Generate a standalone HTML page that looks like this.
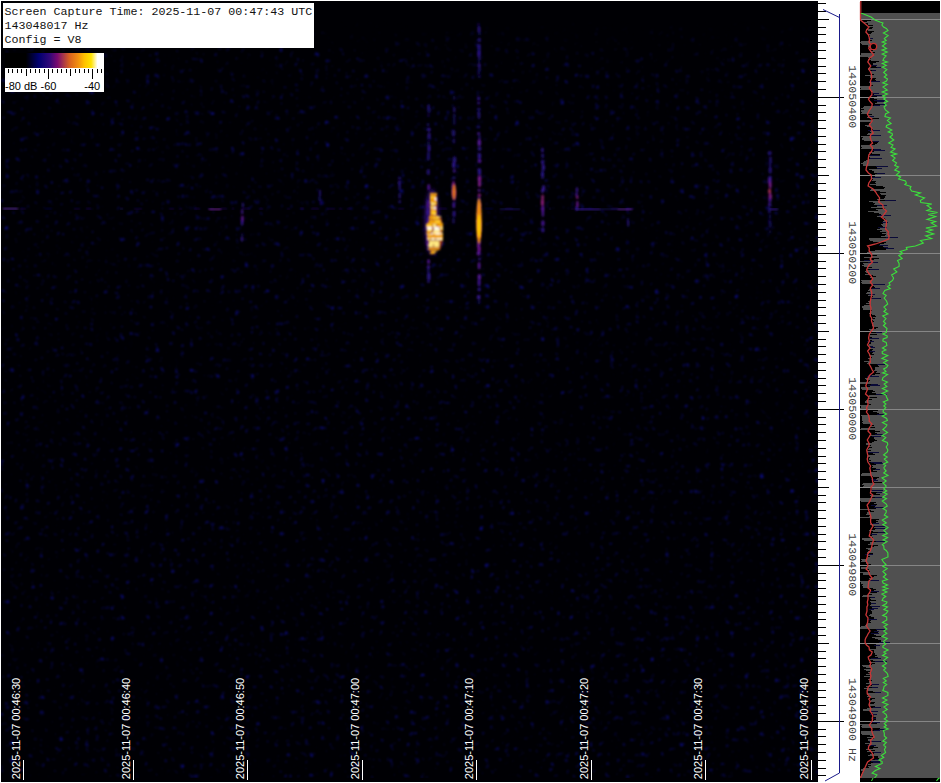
<!DOCTYPE html><html><head><meta charset="utf-8"><style>html,body{margin:0;padding:0;background:#fff;width:941px;height:783px;overflow:hidden}</style></head><body><svg width="941" height="783" style="position:absolute;left:0;top:0">
<defs>
 <linearGradient id="cb" x1="0" x2="1" y1="0" y2="0"><stop offset="0" stop-color="rgb(0, 0, 0)"/><stop offset="0.21" stop-color="rgb(0, 0, 0)"/><stop offset="0.34" stop-color="rgb(0, 0, 112)"/><stop offset="0.45" stop-color="rgb(48, 8, 122)"/><stop offset="0.53" stop-color="rgb(122, 10, 112)"/><stop offset="0.58" stop-color="rgb(160, 48, 80)"/><stop offset="0.65" stop-color="rgb(216, 96, 32)"/><stop offset="0.74" stop-color="rgb(242, 144, 16)"/><stop offset="0.8" stop-color="rgb(255, 192, 0)"/><stop offset="0.87" stop-color="rgb(255, 226, 0)"/><stop offset="0.935" stop-color="rgb(255, 255, 255)"/><stop offset="1" stop-color="rgb(255, 255, 255)"/></linearGradient>
 <filter id="noise" x="0" y="0" width="100%" height="100%" color-interpolation-filters="sRGB">
  <feTurbulence type="fractalNoise" baseFrequency="0.2 0.19" numOctaves="3" seed="11" result="t"/>
  <feColorMatrix in="t" type="matrix" values="0 0 0 0 0.05  0 0 0 0 0.05  0 0 0 0 0.6  3.8 0 0 0 -2.52"/>
  <feGaussianBlur stdDeviation="0.8"/>
 </filter>
 <linearGradient id="fadeg" x1="0" x2="0" y1="0" y2="1" gradientUnits="objectBoundingBox"><stop offset="0" stop-color="#fff" stop-opacity="0"/><stop offset="0.045" stop-color="#fff" stop-opacity="0.8"/><stop offset="0.09" stop-color="#fff" stop-opacity="1"/><stop offset="1" stop-color="#fff" stop-opacity="1"/></linearGradient>
 <mask id="fade" maskUnits="userSpaceOnUse" x="0" y="0" width="941" height="783"><rect x="1" y="20" width="817" height="758" fill="url(#fadeg)"/></mask>
 <filter id="b06" x="-50%" y="-10%" width="200%" height="120%"><feGaussianBlur stdDeviation="0.8"/></filter>
 <filter id="b04" x="-50%" y="-10%" width="200%" height="120%"><feGaussianBlur stdDeviation="0.4"/></filter>
 <filter id="b08" x="-50%" y="-10%" width="200%" height="120%"><feGaussianBlur stdDeviation="0.8"/></filter>
 <filter id="b20" x="-50%" y="-20%" width="200%" height="140%"><feGaussianBlur stdDeviation="2"/></filter>
 <filter id="b10" x="-50%" y="-10%" width="200%" height="120%"><feGaussianBlur stdDeviation="1.0"/></filter>
</defs>
<rect x="1" y="1" width="817" height="781" fill="#000004"/><g mask="url(#fade)"><rect x="1" y="20" width="817" height="758" fill="#000" filter="url(#noise)"/></g><g filter="url(#b06)"><rect x="20" y="208" width="6" height="1.5" fill="#1a1174" opacity="0.5"/><rect x="45" y="208" width="7" height="1.5" fill="#150f6b" opacity="0.5"/><rect x="74" y="208" width="6" height="1.5" fill="#18106f" opacity="0.5"/><rect x="86" y="208" width="5" height="1.5" fill="#28168e" opacity="0.5"/><rect x="120" y="208" width="3" height="1.5" fill="#291791" opacity="0.5"/><rect x="134" y="208" width="8" height="1.5" fill="#191072" opacity="0.5"/><rect x="169" y="208" width="5" height="1.5" fill="#1a1174" opacity="0.5"/><rect x="179" y="208" width="3" height="1.5" fill="#1a1173" opacity="0.5"/><rect x="194" y="208" width="6" height="1.5" fill="#221483" opacity="0.5"/><rect x="208" y="208" width="2" height="1.5" fill="#26158a" opacity="0.5"/><rect x="220" y="208" width="7" height="1.5" fill="#1d127a" opacity="0.5"/><rect x="232" y="208" width="2" height="1.5" fill="#29168f" opacity="0.5"/><rect x="242" y="208" width="8" height="1.5" fill="#1f137d" opacity="0.5"/><rect x="259" y="208" width="4" height="1.5" fill="#26158b" opacity="0.5"/><rect x="287" y="208" width="3" height="1.5" fill="#18106f" opacity="0.5"/><rect x="300" y="208" width="4" height="1.5" fill="#28168d" opacity="0.5"/><rect x="311" y="208" width="8" height="1.5" fill="#20137f" opacity="0.5"/><rect x="327" y="208" width="8" height="1.5" fill="#1c1278" opacity="0.5"/><rect x="339" y="208" width="3" height="1.5" fill="#211380" opacity="0.5"/><rect x="347" y="208" width="4" height="1.5" fill="#231484" opacity="0.5"/><rect x="398" y="208" width="6" height="1.5" fill="#1c1176" opacity="0.5"/><rect x="439" y="208" width="8" height="1.5" fill="#26158b" opacity="0.5"/><rect x="480" y="208" width="2" height="1.5" fill="#1b1175" opacity="0.5"/><rect x="485" y="208" width="8" height="1.5" fill="#150f6a" opacity="0.5"/><rect x="505" y="208" width="8" height="1.5" fill="#1e127c" opacity="0.5"/><rect x="540" y="208" width="4" height="1.5" fill="#1b1176" opacity="0.5"/><rect x="549" y="208" width="2" height="1.5" fill="#2a1792" opacity="0.5"/><rect x="571" y="208" width="3" height="1.5" fill="#181070" opacity="0.5"/><rect x="585" y="208" width="8" height="1.5" fill="#130e66" opacity="0.5"/><rect x="611" y="208" width="8" height="1.5" fill="#1f137e" opacity="0.5"/><rect x="626" y="208" width="8" height="1.5" fill="#241587" opacity="0.5"/><rect x="3" y="208" width="15" height="1.5" fill="#5a2aa0"/></g><g filter="url(#b10)"><ellipse cx="428.6" cy="107.0" rx="1.6" ry="2.9" fill="#27168c" opacity="0.67"/><ellipse cx="429.0" cy="110.3" rx="1.9" ry="3.2" fill="#1e127b" opacity="0.60"/><ellipse cx="428.5" cy="115.5" rx="1.2" ry="1.6" fill="#1f127c" opacity="0.61"/><ellipse cx="428.1" cy="124.7" rx="1.5" ry="1.6" fill="#231485" opacity="0.64"/><ellipse cx="428.9" cy="129.7" rx="1.9" ry="1.9" fill="#341ba5" opacity="0.78"/><ellipse cx="429.1" cy="135.9" rx="1.5" ry="3.3" fill="#31199f" opacity="0.76"/><ellipse cx="428.5" cy="143.2" rx="1.5" ry="3.1" fill="#170f6d" opacity="0.54"/><ellipse cx="429.0" cy="148.2" rx="1.5" ry="3.4" fill="#341ba5" opacity="0.78"/><ellipse cx="428.5" cy="155.2" rx="1.7" ry="3.6" fill="#251588" opacity="0.66"/><ellipse cx="428.2" cy="158.8" rx="1.9" ry="1.9" fill="#211381" opacity="0.63"/><ellipse cx="428.3" cy="171.9" rx="1.6" ry="3.0" fill="#2e1899" opacity="0.73"/><ellipse cx="428.7" cy="187.2" rx="1.3" ry="3.2" fill="#56189d" opacity="0.93"/><ellipse cx="428.7" cy="202.4" rx="1.3" ry="2.3" fill="#5a179b" opacity="0.94"/><ellipse cx="428.2" cy="205.3" rx="1.2" ry="3.2" fill="#70188f" opacity="1.00"/><ellipse cx="428.0" cy="211.9" rx="1.5" ry="3.1" fill="#381ba9" opacity="0.80"/><ellipse cx="428.8" cy="219.3" rx="1.7" ry="2.3" fill="#3a1ba8" opacity="0.81"/><ellipse cx="428.8" cy="222.4" rx="1.8" ry="2.5" fill="#4819a2" opacity="0.87"/><ellipse cx="428.0" cy="235.4" rx="1.4" ry="3.0" fill="#4d19a0" opacity="0.89"/><ellipse cx="428.5" cy="240.2" rx="1.5" ry="2.8" fill="#671696" opacity="0.99"/><ellipse cx="427.9" cy="243.4" rx="1.5" ry="2.9" fill="#6b1694" opacity="1.00"/><ellipse cx="428.0" cy="248.7" rx="1.3" ry="1.6" fill="#2f199b" opacity="0.74"/><ellipse cx="428.6" cy="261.5" rx="1.4" ry="2.5" fill="#56189d" opacity="0.93"/><ellipse cx="428.5" cy="267.1" rx="1.5" ry="2.1" fill="#411aa5" opacity="0.84"/><ellipse cx="428.2" cy="269.7" rx="1.7" ry="1.8" fill="#1e127b" opacity="0.60"/><ellipse cx="428.5" cy="272.7" rx="1.6" ry="2.0" fill="#221482" opacity="0.63"/><ellipse cx="428.8" cy="276.7" rx="1.9" ry="3.6" fill="#30199e" opacity="0.75"/><ellipse cx="428.5" cy="281.4" rx="1.5" ry="1.6" fill="#291791" opacity="0.69"/></g><g filter="url(#b10)"><ellipse cx="454.2" cy="98.0" rx="1.6" ry="2.4" fill="#140e68" opacity="0.52"/><ellipse cx="454.2" cy="109.5" rx="1.3" ry="3.0" fill="#2a1792" opacity="0.70"/><ellipse cx="454.3" cy="116.3" rx="1.3" ry="3.0" fill="#1f137d" opacity="0.61"/><ellipse cx="454.3" cy="121.8" rx="1.6" ry="3.5" fill="#170f6d" opacity="0.54"/><ellipse cx="453.5" cy="133.1" rx="1.8" ry="3.7" fill="#291791" opacity="0.69"/><ellipse cx="453.8" cy="141.0" rx="1.5" ry="2.7" fill="#241486" opacity="0.65"/><ellipse cx="454.5" cy="159.8" rx="1.9" ry="3.5" fill="#2e189a" opacity="0.73"/><ellipse cx="453.7" cy="165.1" rx="1.6" ry="3.4" fill="#351ba6" opacity="0.79"/><ellipse cx="454.3" cy="170.9" rx="1.4" ry="1.8" fill="#461aa3" opacity="0.86"/><ellipse cx="453.8" cy="177.8" rx="1.7" ry="1.6" fill="#2a1791" opacity="0.70"/><ellipse cx="453.5" cy="184.7" rx="1.4" ry="3.8" fill="#71188f" opacity="1.00"/><ellipse cx="453.6" cy="190.2" rx="1.7" ry="2.4" fill="#311aa0" opacity="0.76"/><ellipse cx="453.9" cy="192.9" rx="1.9" ry="3.7" fill="#6c1693" opacity="1.00"/><ellipse cx="454.1" cy="197.7" rx="1.6" ry="2.9" fill="#4e19a0" opacity="0.89"/><ellipse cx="453.8" cy="204.9" rx="1.4" ry="3.2" fill="#421aa5" opacity="0.85"/><ellipse cx="454.1" cy="212.3" rx="1.5" ry="1.5" fill="#351ba6" opacity="0.79"/><ellipse cx="454.0" cy="214.9" rx="1.7" ry="1.6" fill="#351ba7" opacity="0.79"/><ellipse cx="453.5" cy="220.8" rx="1.2" ry="3.2" fill="#261589" opacity="0.66"/></g><ellipse cx="454" cy="192" rx="2" ry="8" fill="#d86a20" filter="url(#b10)"/><g filter="url(#b10)"><ellipse cx="478.5" cy="25.0" rx="1.3" ry="2.4" fill="#17106e" opacity="0.55"/><ellipse cx="479.0" cy="29.5" rx="1.4" ry="3.3" fill="#30199e" opacity="0.75"/><ellipse cx="479.4" cy="33.4" rx="1.9" ry="2.0" fill="#150f6a" opacity="0.53"/><ellipse cx="479.3" cy="39.9" rx="1.7" ry="2.2" fill="#2d1897" opacity="0.72"/><ellipse cx="479.0" cy="46.7" rx="1.7" ry="2.9" fill="#30199d" opacity="0.75"/><ellipse cx="479.1" cy="50.1" rx="1.8" ry="3.6" fill="#211381" opacity="0.63"/><ellipse cx="479.0" cy="54.1" rx="1.8" ry="3.5" fill="#311aa0" opacity="0.76"/><ellipse cx="479.4" cy="58.7" rx="1.4" ry="1.9" fill="#26158b" opacity="0.67"/><ellipse cx="479.0" cy="61.4" rx="1.6" ry="2.1" fill="#120e65" opacity="0.51"/><ellipse cx="479.2" cy="65.6" rx="1.4" ry="2.4" fill="#361ba8" opacity="0.79"/><ellipse cx="479.5" cy="69.5" rx="1.6" ry="2.2" fill="#1e127c" opacity="0.61"/><ellipse cx="478.7" cy="72.5" rx="1.7" ry="3.3" fill="#140e68" opacity="0.52"/><ellipse cx="479.5" cy="76.6" rx="1.7" ry="1.6" fill="#191071" opacity="0.56"/><ellipse cx="478.6" cy="98.5" rx="1.5" ry="1.9" fill="#341ba5" opacity="0.78"/><ellipse cx="478.6" cy="102.9" rx="1.3" ry="1.5" fill="#3f1ba6" opacity="0.83"/><ellipse cx="478.9" cy="109.3" rx="1.9" ry="1.7" fill="#26158a" opacity="0.67"/><ellipse cx="478.6" cy="112.8" rx="1.7" ry="1.9" fill="#1c1177" opacity="0.58"/><ellipse cx="479.0" cy="115.5" rx="1.3" ry="3.8" fill="#2c1896" opacity="0.72"/><ellipse cx="478.7" cy="126.8" rx="1.5" ry="1.6" fill="#26158b" opacity="0.67"/><ellipse cx="478.7" cy="133.7" rx="1.4" ry="1.6" fill="#471aa3" opacity="0.87"/><ellipse cx="479.5" cy="137.3" rx="1.3" ry="1.8" fill="#2a1791" opacity="0.70"/><ellipse cx="479.3" cy="142.6" rx="1.7" ry="3.6" fill="#59179c" opacity="0.94"/><ellipse cx="479.5" cy="148.8" rx="1.8" ry="2.0" fill="#391ba8" opacity="0.81"/><ellipse cx="479.4" cy="156.0" rx="1.7" ry="3.3" fill="#351ba7" opacity="0.79"/><ellipse cx="479.5" cy="161.1" rx="1.9" ry="2.1" fill="#51189f" opacity="0.90"/><ellipse cx="479.2" cy="169.8" rx="1.9" ry="1.8" fill="#31199f" opacity="0.75"/><ellipse cx="479.5" cy="172.6" rx="1.7" ry="2.8" fill="#371ba9" opacity="0.80"/><ellipse cx="479.5" cy="178.8" rx="1.8" ry="3.4" fill="#75198c" opacity="1.00"/><ellipse cx="479.5" cy="184.0" rx="1.5" ry="3.0" fill="#7b1b87" opacity="1.00"/><ellipse cx="479.1" cy="190.4" rx="1.2" ry="1.6" fill="#5e179a" opacity="0.96"/><ellipse cx="479.3" cy="195.3" rx="1.5" ry="1.8" fill="#861e7f" opacity="1.00"/><ellipse cx="479.1" cy="200.5" rx="1.3" ry="3.4" fill="#421aa5" opacity="0.85"/><ellipse cx="479.6" cy="204.9" rx="1.6" ry="2.0" fill="#851d80" opacity="1.00"/><ellipse cx="478.9" cy="207.8" rx="1.6" ry="3.5" fill="#4d19a1" opacity="0.89"/><ellipse cx="478.8" cy="214.6" rx="1.4" ry="3.5" fill="#861e7f" opacity="1.00"/><ellipse cx="478.6" cy="221.3" rx="1.8" ry="1.9" fill="#641697" opacity="0.98"/><ellipse cx="479.3" cy="224.6" rx="1.9" ry="2.7" fill="#691695" opacity="1.00"/><ellipse cx="479.0" cy="227.1" rx="1.7" ry="2.6" fill="#5a179b" opacity="0.94"/><ellipse cx="479.6" cy="230.0" rx="1.8" ry="2.3" fill="#54189e" opacity="0.92"/><ellipse cx="479.0" cy="235.6" rx="1.9" ry="2.2" fill="#72188e" opacity="1.00"/><ellipse cx="478.9" cy="242.7" rx="1.7" ry="3.3" fill="#4e19a0" opacity="0.89"/><ellipse cx="478.5" cy="245.9" rx="1.3" ry="3.0" fill="#6f1790" opacity="1.00"/><ellipse cx="479.1" cy="249.1" rx="1.5" ry="3.6" fill="#6f1791" opacity="1.00"/><ellipse cx="478.6" cy="253.3" rx="1.9" ry="2.4" fill="#5a179b" opacity="0.94"/><ellipse cx="479.5" cy="259.1" rx="1.2" ry="1.6" fill="#3d1ba7" opacity="0.83"/><ellipse cx="479.1" cy="265.7" rx="1.3" ry="3.7" fill="#58179c" opacity="0.94"/><ellipse cx="479.3" cy="277.0" rx="1.7" ry="3.0" fill="#57189c" opacity="0.93"/><ellipse cx="479.1" cy="282.6" rx="1.5" ry="3.6" fill="#461aa3" opacity="0.86"/><ellipse cx="479.2" cy="289.6" rx="1.5" ry="2.0" fill="#361ba9" opacity="0.80"/><ellipse cx="478.7" cy="297.1" rx="1.8" ry="2.4" fill="#3e1ba7" opacity="0.83"/><ellipse cx="479.1" cy="301.6" rx="1.7" ry="2.7" fill="#17106f" opacity="0.55"/></g><ellipse cx="479" cy="221" rx="2.6" ry="23" fill="#f29010" filter="url(#b10)"/><ellipse cx="479" cy="226" rx="1.6" ry="12" fill="#ffd000" filter="url(#b10)"/><g filter="url(#b10)"><ellipse cx="542.4" cy="150.0" rx="1.2" ry="2.6" fill="#391ba9" opacity="0.81"/><ellipse cx="542.7" cy="155.8" rx="1.5" ry="2.4" fill="#2c1795" opacity="0.71"/><ellipse cx="542.6" cy="162.3" rx="1.5" ry="2.7" fill="#351ba7" opacity="0.79"/><ellipse cx="543.4" cy="167.6" rx="1.5" ry="3.3" fill="#391ba8" opacity="0.81"/><ellipse cx="542.5" cy="171.8" rx="1.3" ry="3.4" fill="#1e127a" opacity="0.60"/><ellipse cx="542.6" cy="175.3" rx="1.4" ry="3.7" fill="#321aa1" opacity="0.76"/><ellipse cx="543.6" cy="188.1" rx="1.5" ry="3.1" fill="#3a1ba8" opacity="0.81"/><ellipse cx="542.5" cy="190.7" rx="1.4" ry="2.2" fill="#3f1ba6" opacity="0.83"/><ellipse cx="542.6" cy="197.6" rx="1.2" ry="3.0" fill="#922176" opacity="1.00"/><ellipse cx="542.4" cy="202.5" rx="1.5" ry="3.5" fill="#8c1f7a" opacity="1.00"/><ellipse cx="542.8" cy="208.9" rx="1.4" ry="3.6" fill="#5d179a" opacity="0.95"/><ellipse cx="542.9" cy="213.3" rx="1.1" ry="3.8" fill="#51189f" opacity="0.90"/><ellipse cx="542.9" cy="223.3" rx="1.6" ry="3.0" fill="#4b19a1" opacity="0.88"/><ellipse cx="542.9" cy="229.9" rx="1.5" ry="2.6" fill="#391ba8" opacity="0.81"/></g><g filter="url(#b10)"><ellipse cx="577.0" cy="190.0" rx="1.1" ry="3.0" fill="#421aa5" opacity="0.85"/><ellipse cx="576.5" cy="194.3" rx="1.3" ry="1.6" fill="#4a19a2" opacity="0.88"/><ellipse cx="577.2" cy="197.3" rx="1.2" ry="1.8" fill="#7d1b86" opacity="1.00"/><ellipse cx="577.4" cy="204.5" rx="1.1" ry="3.7" fill="#6b1693" opacity="1.00"/><ellipse cx="576.6" cy="208.5" rx="1.5" ry="2.2" fill="#351ba6" opacity="0.78"/></g><g filter="url(#b10)"><ellipse cx="769.7" cy="153.1" rx="2.0" ry="2.1" fill="#2e189a" opacity="0.73"/><ellipse cx="770.4" cy="158.8" rx="1.4" ry="2.6" fill="#291791" opacity="0.69"/><ellipse cx="770.5" cy="161.8" rx="1.6" ry="2.1" fill="#251588" opacity="0.66"/><ellipse cx="770.1" cy="166.2" rx="1.3" ry="3.8" fill="#231484" opacity="0.64"/><ellipse cx="770.2" cy="170.6" rx="1.6" ry="3.1" fill="#2e1899" opacity="0.73"/><ellipse cx="770.0" cy="177.6" rx="1.9" ry="1.6" fill="#321aa2" opacity="0.77"/><ellipse cx="769.7" cy="181.0" rx="1.9" ry="3.2" fill="#50189f" opacity="0.90"/><ellipse cx="770.2" cy="185.3" rx="1.3" ry="3.3" fill="#781a8a" opacity="1.00"/><ellipse cx="769.6" cy="191.3" rx="1.4" ry="2.7" fill="#b2315a" opacity="1.00"/><ellipse cx="770.2" cy="196.5" rx="1.6" ry="3.6" fill="#7f1c84" opacity="1.00"/><ellipse cx="769.9" cy="200.1" rx="1.5" ry="2.3" fill="#4d19a0" opacity="0.89"/><ellipse cx="769.6" cy="204.5" rx="1.5" ry="1.9" fill="#421aa5" opacity="0.85"/><ellipse cx="769.4" cy="210.3" rx="1.5" ry="3.3" fill="#27158b" opacity="0.67"/><ellipse cx="769.9" cy="216.6" rx="1.4" ry="2.5" fill="#181070" opacity="0.56"/><ellipse cx="769.5" cy="221.3" rx="1.3" ry="2.2" fill="#1a1173" opacity="0.57"/><ellipse cx="770.2" cy="224.4" rx="1.6" ry="3.4" fill="#1c1177" opacity="0.58"/><ellipse cx="770.1" cy="231.8" rx="1.5" ry="1.8" fill="#130e66" opacity="0.51"/></g><g filter="url(#b06)"><rect x="770" y="208.5" width="8" height="1.4" fill="#3a20a0"/></g><g filter="url(#b10)"><ellipse cx="399.4" cy="178.0" rx="1.6" ry="1.8" fill="#231484" opacity="0.64"/><ellipse cx="399.4" cy="183.0" rx="1.4" ry="2.8" fill="#331aa2" opacity="0.77"/><ellipse cx="399.7" cy="187.4" rx="1.1" ry="3.2" fill="#2c1795" opacity="0.71"/><ellipse cx="399.7" cy="195.9" rx="1.1" ry="3.2" fill="#2e189a" opacity="0.73"/><ellipse cx="399.7" cy="201.8" rx="1.2" ry="1.7" fill="#2c1896" opacity="0.72"/></g><g filter="url(#b10)"><ellipse cx="242.9" cy="205.0" rx="1.0" ry="2.8" fill="#311aa0" opacity="0.76"/><ellipse cx="242.2" cy="211.6" rx="1.0" ry="2.7" fill="#4919a2" opacity="0.87"/><ellipse cx="242.4" cy="218.9" rx="1.2" ry="3.5" fill="#611698" opacity="0.97"/><ellipse cx="242.1" cy="222.8" rx="1.2" ry="3.1" fill="#3b1ba8" opacity="0.82"/><ellipse cx="242.3" cy="234.7" rx="1.3" ry="1.8" fill="#191072" opacity="0.56"/><ellipse cx="242.0" cy="239.0" rx="1.1" ry="2.8" fill="#3b1ba8" opacity="0.82"/></g><g filter="url(#b10)"><ellipse cx="320.0" cy="193.0" rx="1.1" ry="3.6" fill="#28168f" opacity="0.69"/><ellipse cx="319.5" cy="198.4" rx="1.3" ry="2.9" fill="#1e127c" opacity="0.61"/><ellipse cx="320.6" cy="202.5" rx="0.9" ry="3.1" fill="#1b1176" opacity="0.58"/></g><g filter="url(#b10)"><ellipse cx="627.4" cy="210.0" rx="0.9" ry="3.0" fill="#1f137e" opacity="0.61"/><ellipse cx="627.9" cy="220.3" rx="0.9" ry="3.0" fill="#241587" opacity="0.65"/><ellipse cx="628.2" cy="223.6" rx="0.9" ry="3.4" fill="#2f199c" opacity="0.74"/><ellipse cx="628.1" cy="242.7" rx="1.0" ry="1.8" fill="#120e64" opacity="0.50"/></g><g filter="url(#b06)"><rect x="576" y="208.5" width="24" height="1.4" fill="#4020a0"/><rect x="618" y="208.5" width="14" height="1.4" fill="#6028a0"/><rect x="600" y="208.5" width="18" height="1.2" fill="#2a1a90" opacity="0.6"/><rect x="209" y="208.5" width="12" height="1.4" fill="#7a2aa0"/><rect x="500" y="208.5" width="20" height="1.2" fill="#2a1a90" opacity="0.7"/></g><ellipse cx="432" cy="222" rx="7" ry="33" fill="#3a1490" opacity="0.8" filter="url(#b20)"/><g filter="url(#b06)"><polygon points="430,193 437,193 437,215 441,217 442,222 443,240 440,250 430,251 428,240 426,228 429,220 430,215" fill="#a84020"/><rect x="430" y="193" width="3" height="2" fill="#f0a010"/><rect x="433" y="193" width="4" height="2" fill="#f0a010"/><rect x="430" y="196" width="6" height="2" fill="#ffc828"/><rect x="430" y="198" width="5" height="2" fill="#f0a010"/><rect x="435" y="198" width="2" height="2" fill="#ffffff"/><rect x="430" y="200" width="2" height="2" fill="#f0a010"/><rect x="432" y="200" width="5" height="2" fill="#f0a010"/><rect x="430" y="202" width="3" height="1" fill="#ffc828"/><rect x="434" y="202" width="3" height="1" fill="#ffc828"/><rect x="431" y="203" width="4" height="2" fill="#ffe880"/><rect x="435" y="203" width="2" height="2" fill="#f0a010"/><rect x="430" y="206" width="5" height="1" fill="#ffc828"/><rect x="431" y="207" width="2" height="2" fill="#ffe880"/><rect x="434" y="207" width="2" height="2" fill="#ffffff"/><rect x="431" y="209" width="5" height="2" fill="#f0a010"/><rect x="430" y="211" width="2" height="1" fill="#f0a010"/><rect x="432" y="211" width="4" height="1" fill="#ffc828"/><rect x="431" y="212" width="5" height="2" fill="#ffc828"/><rect x="430" y="214" width="4" height="1" fill="#f0a010"/><rect x="434" y="214" width="2" height="1" fill="#ffe880"/><rect x="429" y="216" width="5" height="1" fill="#f0a010"/><rect x="434" y="216" width="2" height="1" fill="#f0a010"/><rect x="437" y="216" width="2" height="1" fill="#ffe880"/><rect x="440" y="216" width="1" height="1" fill="#ffe880"/><rect x="429" y="217" width="2" height="2" fill="#f0a010"/><rect x="431" y="217" width="2" height="2" fill="#f0a010"/><rect x="433" y="217" width="6" height="2" fill="#ffc828"/><rect x="429" y="220" width="6" height="3" fill="#f0a010"/><rect x="435" y="220" width="5" height="3" fill="#ffc828"/><rect x="440" y="220" width="1" height="3" fill="#f0a010"/><rect x="427" y="223" width="5" height="1" fill="#f0a010"/><rect x="432" y="223" width="3" height="1" fill="#f0a010"/><rect x="435" y="223" width="6" height="1" fill="#f0a010"/><rect x="441" y="223" width="2" height="1" fill="#f0a010"/><rect x="426" y="224" width="6" height="3" fill="#ffc828"/><rect x="433" y="224" width="3" height="3" fill="#ffe880"/><rect x="437" y="224" width="4" height="3" fill="#f0a010"/><rect x="441" y="224" width="2" height="3" fill="#f0a010"/><rect x="427" y="227" width="5" height="2" fill="#ffffff"/><rect x="434" y="227" width="5" height="2" fill="#ffffff"/><rect x="440" y="227" width="3" height="2" fill="#ffe880"/><rect x="427" y="229" width="2" height="2" fill="#ffe070"/><rect x="429" y="229" width="3" height="2" fill="#ffe880"/><rect x="434" y="229" width="6" height="2" fill="#fff4c0"/><rect x="442" y="229" width="1" height="2" fill="#ffc828"/><rect x="427" y="231" width="4" height="2" fill="#f0a010"/><rect x="433" y="231" width="6" height="2" fill="#ffe070"/><rect x="439" y="231" width="2" height="2" fill="#f0a010"/><rect x="426" y="233" width="3" height="1" fill="#f0a010"/><rect x="431" y="233" width="2" height="1" fill="#ffffff"/><rect x="433" y="233" width="2" height="1" fill="#ffe880"/><rect x="435" y="233" width="6" height="1" fill="#ffffff"/><rect x="441" y="233" width="2" height="1" fill="#ffe880"/><rect x="427" y="234" width="5" height="1" fill="#ffe070"/><rect x="433" y="234" width="3" height="1" fill="#f0a010"/><rect x="436" y="234" width="4" height="1" fill="#ffe070"/><rect x="441" y="234" width="2" height="1" fill="#f0a010"/><rect x="427" y="235" width="2" height="3" fill="#f0a010"/><rect x="429" y="235" width="4" height="3" fill="#f0a010"/><rect x="433" y="235" width="6" height="3" fill="#f0a010"/><rect x="439" y="235" width="4" height="3" fill="#f0a010"/><rect x="427" y="238" width="3" height="2" fill="#ffe880"/><rect x="431" y="238" width="4" height="2" fill="#fff4c0"/><rect x="436" y="238" width="6" height="2" fill="#fff4c0"/><rect x="442" y="238" width="1" height="2" fill="#ffc828"/><rect x="429" y="241" width="5" height="3" fill="#ffe880"/><rect x="434" y="241" width="5" height="3" fill="#ffe880"/><rect x="428" y="244" width="5" height="3" fill="#ffe880"/><rect x="434" y="244" width="5" height="3" fill="#ffe880"/><rect x="428" y="248" width="6" height="2" fill="#f0a010"/><rect x="434" y="248" width="5" height="2" fill="#f0a010"/><rect x="431" y="251" width="2" height="1" fill="#f0a010"/><rect x="433" y="251" width="4" height="1" fill="#ffc828"/><rect x="430" y="252" width="2" height="2" fill="#f0a010"/><rect x="432" y="252" width="3" height="2" fill="#f0a010"/></g><rect x="3" y="3" width="311" height="45" fill="#fff"/><text x="4.5" y="15" font-family="Liberation Mono, monospace" font-size="11.67" fill="#111">Screen Capture Time: 2025-11-07 00:47:43 UTC</text><text x="4.5" y="29" font-family="Liberation Mono, monospace" font-size="11.67" fill="#111">143048017 Hz</text><text x="4.5" y="43" font-family="Liberation Mono, monospace" font-size="11.67" fill="#111">Config = V8</text><rect x="5" y="53" width="99" height="39" fill="#fff"/><rect x="5" y="53" width="99" height="15" fill="url(#cb)"/><rect x="8" y="69" width="1" height="4" fill="#000"/><rect x="12" y="69" width="1" height="4" fill="#000"/><rect x="17" y="69" width="1" height="4" fill="#000"/><rect x="21" y="69" width="1" height="4" fill="#000"/><rect x="26" y="69" width="1" height="7" fill="#000"/><rect x="30" y="69" width="1" height="4" fill="#000"/><rect x="35" y="69" width="1" height="4" fill="#000"/><rect x="39" y="69" width="1" height="4" fill="#000"/><rect x="44" y="69" width="1" height="4" fill="#000"/><rect x="48" y="69" width="1" height="10" fill="#000"/><rect x="52" y="69" width="1" height="4" fill="#000"/><rect x="57" y="69" width="1" height="4" fill="#000"/><rect x="61" y="69" width="1" height="4" fill="#000"/><rect x="66" y="69" width="1" height="4" fill="#000"/><rect x="70" y="69" width="1" height="7" fill="#000"/><rect x="75" y="69" width="1" height="4" fill="#000"/><rect x="79" y="69" width="1" height="4" fill="#000"/><rect x="84" y="69" width="1" height="4" fill="#000"/><rect x="88" y="69" width="1" height="4" fill="#000"/><rect x="92" y="69" width="1" height="10" fill="#000"/><rect x="97" y="69" width="1" height="4" fill="#000"/><rect x="101" y="69" width="1" height="4" fill="#000"/><text x="5" y="90" font-family="Liberation Sans, sans-serif" font-size="11" fill="#000">-80 dB</text><text x="48.5" y="90" text-anchor="middle" font-family="Liberation Sans, sans-serif" font-size="11" fill="#000">-60</text><text x="92.3" y="90" text-anchor="middle" font-family="Liberation Sans, sans-serif" font-size="11" fill="#000">-40</text><rect x="23" y="760" width="1" height="20" fill="#fff"/><text transform="translate(20.4,779.2) rotate(-90)" font-family="Liberation Sans, sans-serif" font-size="11" fill="#fff">2025-11-07 00:46:30</text><rect x="133" y="760" width="1" height="20" fill="#fff"/><text transform="translate(130.4,779.2) rotate(-90)" font-family="Liberation Sans, sans-serif" font-size="11" fill="#fff">2025-11-07 00:46:40</text><rect x="247" y="760" width="1" height="20" fill="#fff"/><text transform="translate(244.4,779.2) rotate(-90)" font-family="Liberation Sans, sans-serif" font-size="11" fill="#fff">2025-11-07 00:46:50</text><rect x="362" y="760" width="1" height="20" fill="#fff"/><text transform="translate(359.4,779.2) rotate(-90)" font-family="Liberation Sans, sans-serif" font-size="11" fill="#fff">2025-11-07 00:47:00</text><rect x="476" y="760" width="1" height="20" fill="#fff"/><text transform="translate(473.4,779.2) rotate(-90)" font-family="Liberation Sans, sans-serif" font-size="11" fill="#fff">2025-11-07 00:47:10</text><rect x="591" y="760" width="1" height="20" fill="#fff"/><text transform="translate(588.4,779.2) rotate(-90)" font-family="Liberation Sans, sans-serif" font-size="11" fill="#fff">2025-11-07 00:47:20</text><rect x="705" y="760" width="1" height="20" fill="#fff"/><text transform="translate(702.4,779.2) rotate(-90)" font-family="Liberation Sans, sans-serif" font-size="11" fill="#fff">2025-11-07 00:47:30</text><rect x="811" y="760" width="1" height="20" fill="#fff"/><text transform="translate(808.4,779.2) rotate(-90)" font-family="Liberation Sans, sans-serif" font-size="11" fill="#fff">2025-11-07 00:47:40</text><rect x="818" y="1" width="42" height="781" fill="#fff"/><rect x="818" y="3" width="8" height="1" fill="#000"/><rect x="818" y="11" width="8" height="1" fill="#000"/><rect x="818" y="19" width="11" height="1" fill="#000"/><rect x="818" y="27" width="8" height="1" fill="#000"/><rect x="818" y="34" width="8" height="1" fill="#000"/><rect x="818" y="42" width="8" height="1" fill="#000"/><rect x="818" y="50" width="8" height="1" fill="#000"/><rect x="818" y="58" width="8" height="1" fill="#000"/><rect x="818" y="66" width="8" height="1" fill="#000"/><rect x="818" y="73" width="8" height="1" fill="#000"/><rect x="818" y="81" width="8" height="1" fill="#000"/><rect x="818" y="89" width="8" height="1" fill="#000"/><rect x="818" y="97" width="26" height="1" fill="#000"/><rect x="818" y="105" width="8" height="1" fill="#000"/><rect x="818" y="112" width="8" height="1" fill="#000"/><rect x="818" y="120" width="8" height="1" fill="#000"/><rect x="818" y="128" width="8" height="1" fill="#000"/><rect x="818" y="136" width="8" height="1" fill="#000"/><rect x="818" y="144" width="8" height="1" fill="#000"/><rect x="818" y="151" width="8" height="1" fill="#000"/><rect x="818" y="159" width="8" height="1" fill="#000"/><rect x="818" y="167" width="8" height="1" fill="#000"/><rect x="818" y="175" width="11" height="1" fill="#000"/><rect x="818" y="183" width="8" height="1" fill="#000"/><rect x="818" y="190" width="8" height="1" fill="#000"/><rect x="818" y="198" width="8" height="1" fill="#000"/><rect x="818" y="206" width="8" height="1" fill="#000"/><rect x="818" y="214" width="8" height="1" fill="#000"/><rect x="818" y="222" width="8" height="1" fill="#000"/><rect x="818" y="229" width="8" height="1" fill="#000"/><rect x="818" y="237" width="8" height="1" fill="#000"/><rect x="818" y="245" width="8" height="1" fill="#000"/><rect x="818" y="253" width="26" height="1" fill="#000"/><rect x="818" y="261" width="8" height="1" fill="#000"/><rect x="818" y="268" width="8" height="1" fill="#000"/><rect x="818" y="276" width="8" height="1" fill="#000"/><rect x="818" y="284" width="8" height="1" fill="#000"/><rect x="818" y="292" width="8" height="1" fill="#000"/><rect x="818" y="300" width="8" height="1" fill="#000"/><rect x="818" y="307" width="8" height="1" fill="#000"/><rect x="818" y="315" width="8" height="1" fill="#000"/><rect x="818" y="323" width="8" height="1" fill="#000"/><rect x="818" y="331" width="11" height="1" fill="#000"/><rect x="818" y="339" width="8" height="1" fill="#000"/><rect x="818" y="346" width="8" height="1" fill="#000"/><rect x="818" y="354" width="8" height="1" fill="#000"/><rect x="818" y="362" width="8" height="1" fill="#000"/><rect x="818" y="370" width="8" height="1" fill="#000"/><rect x="818" y="378" width="8" height="1" fill="#000"/><rect x="818" y="385" width="8" height="1" fill="#000"/><rect x="818" y="393" width="8" height="1" fill="#000"/><rect x="818" y="401" width="8" height="1" fill="#000"/><rect x="818" y="409" width="26" height="1" fill="#000"/><rect x="818" y="417" width="8" height="1" fill="#000"/><rect x="818" y="424" width="8" height="1" fill="#000"/><rect x="818" y="432" width="8" height="1" fill="#000"/><rect x="818" y="440" width="8" height="1" fill="#000"/><rect x="818" y="448" width="8" height="1" fill="#000"/><rect x="818" y="456" width="8" height="1" fill="#000"/><rect x="818" y="463" width="8" height="1" fill="#000"/><rect x="818" y="471" width="8" height="1" fill="#000"/><rect x="818" y="479" width="8" height="1" fill="#000"/><rect x="818" y="487" width="11" height="1" fill="#000"/><rect x="818" y="495" width="8" height="1" fill="#000"/><rect x="818" y="502" width="8" height="1" fill="#000"/><rect x="818" y="510" width="8" height="1" fill="#000"/><rect x="818" y="518" width="8" height="1" fill="#000"/><rect x="818" y="526" width="8" height="1" fill="#000"/><rect x="818" y="534" width="8" height="1" fill="#000"/><rect x="818" y="541" width="8" height="1" fill="#000"/><rect x="818" y="549" width="8" height="1" fill="#000"/><rect x="818" y="557" width="8" height="1" fill="#000"/><rect x="818" y="565" width="26" height="1" fill="#000"/><rect x="818" y="573" width="8" height="1" fill="#000"/><rect x="818" y="580" width="8" height="1" fill="#000"/><rect x="818" y="588" width="8" height="1" fill="#000"/><rect x="818" y="596" width="8" height="1" fill="#000"/><rect x="818" y="604" width="8" height="1" fill="#000"/><rect x="818" y="612" width="8" height="1" fill="#000"/><rect x="818" y="619" width="8" height="1" fill="#000"/><rect x="818" y="627" width="8" height="1" fill="#000"/><rect x="818" y="635" width="8" height="1" fill="#000"/><rect x="818" y="643" width="11" height="1" fill="#000"/><rect x="818" y="651" width="8" height="1" fill="#000"/><rect x="818" y="658" width="8" height="1" fill="#000"/><rect x="818" y="666" width="8" height="1" fill="#000"/><rect x="818" y="674" width="8" height="1" fill="#000"/><rect x="818" y="682" width="8" height="1" fill="#000"/><rect x="818" y="690" width="8" height="1" fill="#000"/><rect x="818" y="697" width="8" height="1" fill="#000"/><rect x="818" y="705" width="8" height="1" fill="#000"/><rect x="818" y="713" width="8" height="1" fill="#000"/><rect x="818" y="721" width="26" height="1" fill="#000"/><rect x="818" y="729" width="8" height="1" fill="#000"/><rect x="818" y="736" width="8" height="1" fill="#000"/><rect x="818" y="744" width="8" height="1" fill="#000"/><rect x="818" y="752" width="8" height="1" fill="#000"/><rect x="818" y="760" width="8" height="1" fill="#000"/><rect x="818" y="768" width="8" height="1" fill="#000"/><rect x="818" y="775" width="8" height="1" fill="#000"/><polyline points="823,9.5 839.5,17.5 839.5,773 825,781" fill="none" stroke="#1a1a8a" stroke-width="1"/><rect x="839" y="14" width="1" height="4" fill="#1a1a8a"/><text transform="translate(849,96.8) rotate(90)" text-anchor="middle" font-family="Liberation Mono, monospace" font-size="11.67" fill="#444">143050400</text><text transform="translate(849,252.8) rotate(90)" text-anchor="middle" font-family="Liberation Mono, monospace" font-size="11.67" fill="#444">143050200</text><text transform="translate(849,408.8) rotate(90)" text-anchor="middle" font-family="Liberation Mono, monospace" font-size="11.67" fill="#444">143050000</text><text transform="translate(849,564.8) rotate(90)" text-anchor="middle" font-family="Liberation Mono, monospace" font-size="11.67" fill="#444">143049800</text><text transform="translate(849,678) rotate(90)" font-family="Liberation Mono, monospace" font-size="11.67" fill="#444">143049600 Hz</text><rect x="860" y="1" width="80" height="781" fill="#505050"/><rect x="860" y="20" width="11" height="1" fill="#000"/><rect x="860" y="21" width="7" height="1" fill="#000"/><rect x="860" y="22" width="3" height="1" fill="#000"/><rect x="860" y="23" width="8" height="1" fill="#000"/><rect x="860" y="24" width="8" height="1" fill="#000"/><rect x="860" y="25" width="13" height="1" fill="#000"/><rect x="860" y="26" width="9" height="1" fill="#000"/><rect x="860" y="27" width="13" height="1" fill="#000"/><rect x="860" y="28" width="12" height="1" fill="#000"/><rect x="860" y="29" width="6" height="1" fill="#000"/><rect x="860" y="30" width="8" height="1" fill="#000"/><rect x="860" y="31" width="14" height="1" fill="#000"/><rect x="860" y="32" width="12" height="1" fill="#000"/><rect x="860" y="33" width="11" height="1" fill="#000"/><rect x="860" y="34" width="8" height="1" fill="#000"/><rect x="860" y="35" width="10" height="1" fill="#000"/><rect x="860" y="36" width="10" height="1" fill="#000"/><rect x="860" y="37" width="10" height="1" fill="#000"/><rect x="860" y="38" width="8" height="1" fill="#000"/><rect x="868" y="38" width="5" height="1" fill="#0a0a38"/><rect x="860" y="39" width="9" height="1" fill="#000"/><rect x="860" y="40" width="12" height="1" fill="#000"/><rect x="860" y="41" width="1" height="1" fill="#000"/><rect x="860" y="43" width="1" height="1" fill="#000"/><rect x="860" y="44" width="2" height="1" fill="#000"/><rect x="860" y="45" width="8" height="1" fill="#000"/><rect x="860" y="46" width="8" height="1" fill="#000"/><rect x="860" y="47" width="11" height="1" fill="#000"/><rect x="860" y="48" width="17" height="1" fill="#000"/><rect x="860" y="49" width="10" height="1" fill="#000"/><rect x="860" y="50" width="13" height="1" fill="#000"/><rect x="860" y="51" width="10" height="1" fill="#000"/><rect x="860" y="52" width="15" height="1" fill="#000"/><rect x="860" y="53" width="1" height="1" fill="#000"/><rect x="860" y="54" width="1" height="1" fill="#000"/><rect x="860" y="57" width="8" height="1" fill="#000"/><rect x="860" y="58" width="11" height="1" fill="#000"/><rect x="860" y="59" width="8" height="1" fill="#000"/><rect x="860" y="60" width="11" height="1" fill="#000"/><rect x="860" y="61" width="19" height="1" fill="#000"/><rect x="860" y="62" width="16" height="1" fill="#000"/><rect x="860" y="63" width="13" height="1" fill="#000"/><rect x="860" y="64" width="13" height="1" fill="#000"/><rect x="860" y="65" width="12" height="1" fill="#000"/><rect x="872" y="65" width="5" height="1" fill="#0a0a38"/><rect x="860" y="66" width="16" height="1" fill="#000"/><rect x="860" y="67" width="17" height="1" fill="#000"/><rect x="877" y="67" width="4" height="1" fill="#0a0a38"/><rect x="860" y="68" width="8" height="1" fill="#000"/><rect x="860" y="69" width="8" height="1" fill="#000"/><rect x="860" y="70" width="12" height="1" fill="#000"/><rect x="872" y="70" width="4" height="1" fill="#0a0a38"/><rect x="860" y="71" width="10" height="1" fill="#000"/><rect x="860" y="72" width="11" height="1" fill="#000"/><rect x="860" y="73" width="11" height="1" fill="#000"/><rect x="860" y="74" width="14" height="1" fill="#000"/><rect x="860" y="75" width="5" height="1" fill="#000"/><rect x="860" y="76" width="10" height="1" fill="#000"/><rect x="860" y="77" width="10" height="1" fill="#000"/><rect x="860" y="78" width="16" height="1" fill="#000"/><rect x="860" y="79" width="15" height="1" fill="#000"/><rect x="860" y="80" width="16" height="1" fill="#000"/><rect x="860" y="81" width="9" height="1" fill="#000"/><rect x="869" y="81" width="11" height="1" fill="#0a0a38"/><rect x="860" y="82" width="9" height="1" fill="#000"/><rect x="860" y="83" width="10" height="1" fill="#000"/><rect x="860" y="84" width="10" height="1" fill="#000"/><rect x="860" y="85" width="13" height="1" fill="#000"/><rect x="860" y="88" width="1" height="1" fill="#000"/><rect x="860" y="90" width="12" height="1" fill="#000"/><rect x="860" y="91" width="11" height="1" fill="#000"/><rect x="860" y="92" width="13" height="1" fill="#000"/><rect x="860" y="93" width="13" height="1" fill="#000"/><rect x="873" y="93" width="6" height="1" fill="#0a0a38"/><rect x="860" y="94" width="14" height="1" fill="#000"/><rect x="860" y="95" width="11" height="1" fill="#000"/><rect x="871" y="95" width="11" height="1" fill="#0a0a38"/><rect x="860" y="96" width="17" height="1" fill="#000"/><rect x="860" y="97" width="11" height="1" fill="#000"/><rect x="860" y="98" width="14" height="1" fill="#000"/><rect x="860" y="99" width="17" height="1" fill="#000"/><rect x="860" y="100" width="14" height="1" fill="#000"/><rect x="874" y="100" width="11" height="1" fill="#0a0a38"/><rect x="860" y="101" width="17" height="1" fill="#000"/><rect x="877" y="101" width="7" height="1" fill="#0a0a38"/><rect x="860" y="102" width="17" height="1" fill="#000"/><rect x="860" y="103" width="15" height="1" fill="#000"/><rect x="860" y="104" width="20" height="1" fill="#000"/><rect x="880" y="104" width="7" height="1" fill="#0a0a38"/><rect x="860" y="105" width="14" height="1" fill="#000"/><rect x="874" y="105" width="6" height="1" fill="#0a0a38"/><rect x="860" y="106" width="4" height="1" fill="#000"/><rect x="860" y="107" width="3" height="1" fill="#000"/><rect x="860" y="108" width="1" height="1" fill="#000"/><rect x="860" y="109" width="4" height="1" fill="#000"/><rect x="860" y="110" width="1" height="1" fill="#000"/><rect x="860" y="111" width="1" height="1" fill="#000"/><rect x="860" y="112" width="2" height="1" fill="#000"/><rect x="860" y="113" width="1" height="1" fill="#000"/><rect x="860" y="114" width="12" height="1" fill="#000"/><rect x="860" y="115" width="9" height="1" fill="#000"/><rect x="860" y="116" width="8" height="1" fill="#000"/><rect x="868" y="116" width="6" height="1" fill="#0a0a38"/><rect x="860" y="117" width="7" height="1" fill="#000"/><rect x="860" y="118" width="19" height="1" fill="#000"/><rect x="860" y="119" width="13" height="1" fill="#000"/><rect x="860" y="122" width="11" height="1" fill="#000"/><rect x="860" y="123" width="9" height="1" fill="#000"/><rect x="860" y="124" width="10" height="1" fill="#000"/><rect x="860" y="125" width="5" height="1" fill="#000"/><rect x="860" y="126" width="7" height="1" fill="#000"/><rect x="860" y="127" width="12" height="1" fill="#000"/><rect x="860" y="128" width="12" height="1" fill="#000"/><rect x="860" y="129" width="13" height="1" fill="#000"/><rect x="860" y="130" width="8" height="1" fill="#000"/><rect x="868" y="130" width="12" height="1" fill="#0a0a38"/><rect x="860" y="131" width="10" height="1" fill="#000"/><rect x="860" y="132" width="11" height="1" fill="#000"/><rect x="860" y="133" width="8" height="1" fill="#000"/><rect x="860" y="134" width="7" height="1" fill="#000"/><rect x="860" y="135" width="10" height="1" fill="#000"/><rect x="870" y="135" width="11" height="1" fill="#0a0a38"/><rect x="860" y="136" width="1" height="1" fill="#000"/><rect x="860" y="137" width="3" height="1" fill="#000"/><rect x="860" y="138" width="2" height="1" fill="#000"/><rect x="860" y="139" width="2" height="1" fill="#000"/><rect x="860" y="140" width="4" height="1" fill="#000"/><rect x="860" y="141" width="13" height="1" fill="#000"/><rect x="873" y="141" width="6" height="1" fill="#0a0a38"/><rect x="860" y="142" width="18" height="1" fill="#000"/><rect x="860" y="143" width="17" height="1" fill="#000"/><rect x="860" y="144" width="15" height="1" fill="#000"/><rect x="860" y="145" width="1" height="1" fill="#000"/><rect x="860" y="146" width="1" height="1" fill="#000"/><rect x="860" y="147" width="2" height="1" fill="#000"/><rect x="860" y="148" width="1" height="1" fill="#000"/><rect x="860" y="149" width="14" height="1" fill="#000"/><rect x="874" y="149" width="7" height="1" fill="#0a0a38"/><rect x="860" y="150" width="13" height="1" fill="#000"/><rect x="873" y="150" width="12" height="1" fill="#0a0a38"/><rect x="860" y="151" width="14" height="1" fill="#000"/><rect x="860" y="152" width="9" height="1" fill="#000"/><rect x="860" y="153" width="12" height="1" fill="#000"/><rect x="860" y="154" width="20" height="1" fill="#000"/><rect x="860" y="155" width="10" height="1" fill="#000"/><rect x="870" y="155" width="10" height="1" fill="#0a0a38"/><rect x="860" y="156" width="8" height="1" fill="#000"/><rect x="860" y="157" width="10" height="1" fill="#000"/><rect x="860" y="158" width="10" height="1" fill="#000"/><rect x="870" y="158" width="12" height="1" fill="#0a0a38"/><rect x="860" y="159" width="8" height="1" fill="#000"/><rect x="860" y="160" width="6" height="1" fill="#000"/><rect x="860" y="161" width="4" height="1" fill="#000"/><rect x="860" y="162" width="3" height="1" fill="#000"/><rect x="860" y="163" width="1" height="1" fill="#000"/><rect x="860" y="164" width="3" height="1" fill="#000"/><rect x="860" y="165" width="3" height="1" fill="#000"/><rect x="860" y="166" width="16" height="1" fill="#000"/><rect x="876" y="166" width="12" height="1" fill="#0a0a38"/><rect x="860" y="167" width="17" height="1" fill="#000"/><rect x="860" y="168" width="17" height="1" fill="#000"/><rect x="877" y="168" width="5" height="1" fill="#0a0a38"/><rect x="860" y="169" width="9" height="1" fill="#000"/><rect x="860" y="170" width="12" height="1" fill="#000"/><rect x="860" y="171" width="14" height="1" fill="#000"/><rect x="860" y="172" width="14" height="1" fill="#000"/><rect x="860" y="173" width="17" height="1" fill="#000"/><rect x="877" y="173" width="8" height="1" fill="#0a0a38"/><rect x="860" y="174" width="15" height="1" fill="#000"/><rect x="860" y="175" width="17" height="1" fill="#000"/><rect x="860" y="176" width="15" height="1" fill="#000"/><rect x="860" y="177" width="11" height="1" fill="#000"/><rect x="871" y="177" width="10" height="1" fill="#0a0a38"/><rect x="860" y="178" width="12" height="1" fill="#000"/><rect x="860" y="179" width="13" height="1" fill="#000"/><rect x="860" y="180" width="12" height="1" fill="#000"/><rect x="860" y="181" width="16" height="1" fill="#000"/><rect x="860" y="182" width="15" height="1" fill="#000"/><rect x="860" y="183" width="16" height="1" fill="#000"/><rect x="860" y="184" width="10" height="1" fill="#000"/><rect x="860" y="185" width="16" height="1" fill="#000"/><rect x="860" y="186" width="23" height="1" fill="#000"/><rect x="860" y="187" width="25" height="1" fill="#000"/><rect x="860" y="188" width="24" height="1" fill="#000"/><rect x="860" y="189" width="11" height="1" fill="#000"/><rect x="860" y="190" width="10" height="1" fill="#000"/><rect x="860" y="191" width="20" height="1" fill="#000"/><rect x="860" y="192" width="26" height="1" fill="#000"/><rect x="860" y="193" width="20" height="1" fill="#000"/><rect x="860" y="194" width="21" height="1" fill="#000"/><rect x="860" y="195" width="26" height="1" fill="#000"/><rect x="860" y="196" width="25" height="1" fill="#000"/><rect x="860" y="197" width="25" height="1" fill="#000"/><rect x="860" y="198" width="24" height="1" fill="#000"/><rect x="860" y="199" width="17" height="1" fill="#000"/><rect x="860" y="200" width="25" height="1" fill="#000"/><rect x="885" y="200" width="11" height="1" fill="#0a0a38"/><rect x="860" y="201" width="9" height="1" fill="#000"/><rect x="860" y="202" width="13" height="1" fill="#000"/><rect x="860" y="203" width="15" height="1" fill="#000"/><rect x="860" y="204" width="14" height="1" fill="#000"/><rect x="860" y="205" width="17" height="1" fill="#000"/><rect x="877" y="205" width="10" height="1" fill="#0a0a38"/><rect x="860" y="206" width="17" height="1" fill="#000"/><rect x="860" y="207" width="11" height="1" fill="#000"/><rect x="860" y="208" width="25" height="1" fill="#000"/><rect x="860" y="209" width="16" height="1" fill="#000"/><rect x="860" y="210" width="18" height="1" fill="#000"/><rect x="860" y="211" width="8" height="1" fill="#000"/><rect x="860" y="212" width="14" height="1" fill="#000"/><rect x="860" y="213" width="19" height="1" fill="#000"/><rect x="860" y="214" width="21" height="1" fill="#000"/><rect x="860" y="215" width="19" height="1" fill="#000"/><rect x="879" y="215" width="12" height="1" fill="#0a0a38"/><rect x="860" y="216" width="17" height="1" fill="#000"/><rect x="860" y="217" width="23" height="1" fill="#000"/><rect x="860" y="218" width="25" height="1" fill="#000"/><rect x="860" y="219" width="26" height="1" fill="#000"/><rect x="860" y="220" width="24" height="1" fill="#000"/><rect x="860" y="221" width="23" height="1" fill="#000"/><rect x="860" y="222" width="22" height="1" fill="#000"/><rect x="882" y="222" width="6" height="1" fill="#0a0a38"/><rect x="860" y="223" width="23" height="1" fill="#000"/><rect x="860" y="224" width="21" height="1" fill="#000"/><rect x="860" y="225" width="22" height="1" fill="#000"/><rect x="860" y="226" width="23" height="1" fill="#000"/><rect x="860" y="227" width="18" height="1" fill="#000"/><rect x="878" y="227" width="9" height="1" fill="#0a0a38"/><rect x="860" y="228" width="20" height="1" fill="#000"/><rect x="860" y="229" width="17" height="1" fill="#000"/><rect x="860" y="230" width="22" height="1" fill="#000"/><rect x="860" y="231" width="20" height="1" fill="#000"/><rect x="860" y="232" width="26" height="1" fill="#000"/><rect x="860" y="233" width="22" height="1" fill="#000"/><rect x="860" y="234" width="26" height="1" fill="#000"/><rect x="860" y="235" width="25" height="1" fill="#000"/><rect x="860" y="236" width="21" height="1" fill="#000"/><rect x="860" y="237" width="26" height="1" fill="#000"/><rect x="886" y="237" width="12" height="1" fill="#0a0a38"/><rect x="860" y="238" width="9" height="1" fill="#000"/><rect x="860" y="239" width="9" height="1" fill="#000"/><rect x="860" y="240" width="10" height="1" fill="#000"/><rect x="860" y="241" width="13" height="1" fill="#000"/><rect x="860" y="242" width="26" height="1" fill="#000"/><rect x="860" y="243" width="24" height="1" fill="#000"/><rect x="860" y="244" width="20" height="1" fill="#000"/><rect x="860" y="245" width="19" height="1" fill="#000"/><rect x="879" y="245" width="9" height="1" fill="#0a0a38"/><rect x="860" y="246" width="23" height="1" fill="#000"/><rect x="860" y="247" width="24" height="1" fill="#000"/><rect x="884" y="247" width="4" height="1" fill="#0a0a38"/><rect x="860" y="248" width="26" height="1" fill="#000"/><rect x="886" y="248" width="8" height="1" fill="#0a0a38"/><rect x="860" y="249" width="26" height="1" fill="#000"/><rect x="860" y="250" width="15" height="1" fill="#000"/><rect x="860" y="251" width="10" height="1" fill="#000"/><rect x="860" y="252" width="7" height="1" fill="#000"/><rect x="860" y="253" width="14" height="1" fill="#000"/><rect x="860" y="254" width="10" height="1" fill="#000"/><rect x="860" y="255" width="17" height="1" fill="#000"/><rect x="860" y="256" width="11" height="1" fill="#000"/><rect x="860" y="257" width="4" height="1" fill="#000"/><rect x="860" y="258" width="19" height="1" fill="#000"/><rect x="860" y="259" width="14" height="1" fill="#000"/><rect x="860" y="260" width="4" height="1" fill="#000"/><rect x="864" y="260" width="6" height="1" fill="#0a0a38"/><rect x="860" y="262" width="8" height="1" fill="#000"/><rect x="868" y="262" width="10" height="1" fill="#0a0a38"/><rect x="860" y="263" width="3" height="1" fill="#000"/><rect x="860" y="264" width="4" height="1" fill="#000"/><rect x="860" y="265" width="2" height="1" fill="#000"/><rect x="860" y="266" width="4" height="1" fill="#000"/><rect x="860" y="267" width="12" height="1" fill="#000"/><rect x="860" y="268" width="8" height="1" fill="#000"/><rect x="860" y="269" width="10" height="1" fill="#000"/><rect x="870" y="269" width="9" height="1" fill="#0a0a38"/><rect x="860" y="270" width="6" height="1" fill="#000"/><rect x="860" y="271" width="5" height="1" fill="#000"/><rect x="860" y="272" width="6" height="1" fill="#000"/><rect x="860" y="273" width="9" height="1" fill="#000"/><rect x="860" y="274" width="5" height="1" fill="#000"/><rect x="860" y="275" width="13" height="1" fill="#000"/><rect x="860" y="276" width="16" height="1" fill="#000"/><rect x="860" y="277" width="10" height="1" fill="#000"/><rect x="860" y="278" width="12" height="1" fill="#000"/><rect x="860" y="279" width="13" height="1" fill="#000"/><rect x="860" y="280" width="1" height="1" fill="#000"/><rect x="860" y="281" width="2" height="1" fill="#000"/><rect x="860" y="282" width="1" height="1" fill="#000"/><rect x="860" y="283" width="2" height="1" fill="#000"/><rect x="860" y="284" width="13" height="1" fill="#000"/><rect x="873" y="284" width="12" height="1" fill="#0a0a38"/><rect x="860" y="285" width="12" height="1" fill="#000"/><rect x="860" y="286" width="14" height="1" fill="#000"/><rect x="860" y="287" width="15" height="1" fill="#000"/><rect x="860" y="288" width="12" height="1" fill="#000"/><rect x="872" y="288" width="8" height="1" fill="#0a0a38"/><rect x="860" y="289" width="9" height="1" fill="#000"/><rect x="860" y="290" width="8" height="1" fill="#000"/><rect x="860" y="291" width="10" height="1" fill="#000"/><rect x="860" y="292" width="7" height="1" fill="#000"/><rect x="860" y="293" width="6" height="1" fill="#000"/><rect x="860" y="294" width="9" height="1" fill="#000"/><rect x="869" y="294" width="6" height="1" fill="#0a0a38"/><rect x="860" y="295" width="8" height="1" fill="#000"/><rect x="860" y="296" width="13" height="1" fill="#000"/><rect x="860" y="297" width="12" height="1" fill="#000"/><rect x="860" y="298" width="12" height="1" fill="#000"/><rect x="872" y="298" width="9" height="1" fill="#0a0a38"/><rect x="860" y="299" width="10" height="1" fill="#000"/><rect x="860" y="300" width="10" height="1" fill="#000"/><rect x="860" y="301" width="8" height="1" fill="#000"/><rect x="860" y="302" width="9" height="1" fill="#000"/><rect x="860" y="303" width="6" height="1" fill="#000"/><rect x="860" y="304" width="10" height="1" fill="#000"/><rect x="860" y="305" width="4" height="1" fill="#000"/><rect x="860" y="306" width="2" height="1" fill="#000"/><rect x="860" y="307" width="2" height="1" fill="#000"/><rect x="860" y="308" width="3" height="1" fill="#000"/><rect x="860" y="309" width="3" height="1" fill="#000"/><rect x="860" y="310" width="12" height="1" fill="#000"/><rect x="860" y="311" width="10" height="1" fill="#000"/><rect x="860" y="312" width="10" height="1" fill="#000"/><rect x="860" y="313" width="9" height="1" fill="#000"/><rect x="860" y="314" width="12" height="1" fill="#000"/><rect x="860" y="315" width="15" height="1" fill="#000"/><rect x="860" y="316" width="16" height="1" fill="#000"/><rect x="860" y="317" width="13" height="1" fill="#000"/><rect x="860" y="318" width="15" height="1" fill="#000"/><rect x="860" y="319" width="12" height="1" fill="#000"/><rect x="860" y="320" width="13" height="1" fill="#000"/><rect x="860" y="321" width="14" height="1" fill="#000"/><rect x="860" y="322" width="13" height="1" fill="#000"/><rect x="860" y="323" width="12" height="1" fill="#000"/><rect x="860" y="324" width="13" height="1" fill="#000"/><rect x="860" y="325" width="12" height="1" fill="#000"/><rect x="860" y="326" width="13" height="1" fill="#000"/><rect x="860" y="327" width="18" height="1" fill="#000"/><rect x="860" y="328" width="16" height="1" fill="#000"/><rect x="860" y="329" width="9" height="1" fill="#000"/><rect x="860" y="330" width="10" height="1" fill="#000"/><rect x="860" y="331" width="11" height="1" fill="#000"/><rect x="860" y="332" width="16" height="1" fill="#000"/><rect x="876" y="332" width="6" height="1" fill="#0a0a38"/><rect x="860" y="333" width="10" height="1" fill="#000"/><rect x="860" y="334" width="17" height="1" fill="#000"/><rect x="860" y="335" width="10" height="1" fill="#000"/><rect x="860" y="336" width="10" height="1" fill="#000"/><rect x="860" y="337" width="12" height="1" fill="#000"/><rect x="860" y="338" width="10" height="1" fill="#000"/><rect x="870" y="338" width="9" height="1" fill="#0a0a38"/><rect x="860" y="339" width="10" height="1" fill="#000"/><rect x="860" y="340" width="12" height="1" fill="#000"/><rect x="860" y="341" width="7" height="1" fill="#000"/><rect x="867" y="341" width="7" height="1" fill="#0a0a38"/><rect x="860" y="342" width="11" height="1" fill="#000"/><rect x="860" y="343" width="11" height="1" fill="#000"/><rect x="860" y="344" width="9" height="1" fill="#000"/><rect x="860" y="345" width="9" height="1" fill="#000"/><rect x="860" y="346" width="9" height="1" fill="#000"/><rect x="869" y="346" width="4" height="1" fill="#0a0a38"/><rect x="860" y="347" width="11" height="1" fill="#000"/><rect x="871" y="347" width="4" height="1" fill="#0a0a38"/><rect x="860" y="348" width="9" height="1" fill="#000"/><rect x="860" y="349" width="13" height="1" fill="#000"/><rect x="860" y="350" width="12" height="1" fill="#000"/><rect x="860" y="351" width="10" height="1" fill="#000"/><rect x="870" y="351" width="5" height="1" fill="#0a0a38"/><rect x="860" y="352" width="13" height="1" fill="#000"/><rect x="860" y="353" width="12" height="1" fill="#000"/><rect x="860" y="354" width="14" height="1" fill="#000"/><rect x="860" y="355" width="9" height="1" fill="#000"/><rect x="860" y="356" width="11" height="1" fill="#000"/><rect x="860" y="357" width="12" height="1" fill="#000"/><rect x="860" y="358" width="8" height="1" fill="#000"/><rect x="860" y="359" width="10" height="1" fill="#000"/><rect x="860" y="360" width="10" height="1" fill="#000"/><rect x="860" y="361" width="4" height="1" fill="#000"/><rect x="860" y="362" width="8" height="1" fill="#000"/><rect x="860" y="363" width="7" height="1" fill="#000"/><rect x="860" y="364" width="17" height="1" fill="#000"/><rect x="877" y="364" width="8" height="1" fill="#0a0a38"/><rect x="860" y="365" width="18" height="1" fill="#000"/><rect x="860" y="366" width="19" height="1" fill="#000"/><rect x="860" y="367" width="15" height="1" fill="#000"/><rect x="860" y="368" width="15" height="1" fill="#000"/><rect x="860" y="369" width="15" height="1" fill="#000"/><rect x="860" y="370" width="14" height="1" fill="#000"/><rect x="860" y="371" width="17" height="1" fill="#000"/><rect x="860" y="372" width="16" height="1" fill="#000"/><rect x="860" y="373" width="20" height="1" fill="#000"/><rect x="860" y="374" width="15" height="1" fill="#000"/><rect x="860" y="375" width="8" height="1" fill="#000"/><rect x="868" y="375" width="4" height="1" fill="#0a0a38"/><rect x="860" y="376" width="7" height="1" fill="#000"/><rect x="867" y="376" width="12" height="1" fill="#0a0a38"/><rect x="860" y="377" width="9" height="1" fill="#000"/><rect x="860" y="378" width="5" height="1" fill="#000"/><rect x="860" y="379" width="6" height="1" fill="#000"/><rect x="860" y="380" width="10" height="1" fill="#000"/><rect x="860" y="381" width="9" height="1" fill="#000"/><rect x="860" y="384" width="11" height="1" fill="#000"/><rect x="871" y="384" width="7" height="1" fill="#0a0a38"/><rect x="860" y="385" width="8" height="1" fill="#000"/><rect x="868" y="385" width="12" height="1" fill="#0a0a38"/><rect x="860" y="386" width="10" height="1" fill="#000"/><rect x="860" y="387" width="1" height="1" fill="#000"/><rect x="860" y="388" width="1" height="1" fill="#000"/><rect x="860" y="389" width="2" height="1" fill="#000"/><rect x="860" y="390" width="13" height="1" fill="#000"/><rect x="860" y="391" width="15" height="1" fill="#000"/><rect x="860" y="392" width="12" height="1" fill="#000"/><rect x="860" y="393" width="16" height="1" fill="#000"/><rect x="860" y="394" width="16" height="1" fill="#000"/><rect x="876" y="394" width="11" height="1" fill="#0a0a38"/><rect x="860" y="395" width="9" height="1" fill="#000"/><rect x="860" y="396" width="8" height="1" fill="#000"/><rect x="860" y="397" width="17" height="1" fill="#000"/><rect x="860" y="398" width="9" height="1" fill="#000"/><rect x="860" y="399" width="12" height="1" fill="#000"/><rect x="860" y="400" width="6" height="1" fill="#000"/><rect x="860" y="401" width="5" height="1" fill="#000"/><rect x="860" y="402" width="5" height="1" fill="#000"/><rect x="860" y="403" width="9" height="1" fill="#000"/><rect x="860" y="404" width="11" height="1" fill="#000"/><rect x="860" y="406" width="1" height="1" fill="#000"/><rect x="860" y="407" width="1" height="1" fill="#000"/><rect x="860" y="409" width="1" height="1" fill="#000"/><rect x="860" y="410" width="18" height="1" fill="#000"/><rect x="860" y="411" width="13" height="1" fill="#000"/><rect x="860" y="412" width="17" height="1" fill="#000"/><rect x="860" y="413" width="19" height="1" fill="#000"/><rect x="860" y="414" width="17" height="1" fill="#000"/><rect x="877" y="414" width="9" height="1" fill="#0a0a38"/><rect x="860" y="415" width="1" height="1" fill="#000"/><rect x="860" y="416" width="2" height="1" fill="#000"/><rect x="860" y="417" width="2" height="1" fill="#000"/><rect x="860" y="418" width="2" height="1" fill="#000"/><rect x="860" y="419" width="2" height="1" fill="#000"/><rect x="860" y="420" width="2" height="1" fill="#000"/><rect x="860" y="421" width="3" height="1" fill="#000"/><rect x="860" y="422" width="2" height="1" fill="#000"/><rect x="860" y="423" width="3" height="1" fill="#000"/><rect x="860" y="424" width="10" height="1" fill="#000"/><rect x="860" y="425" width="14" height="1" fill="#000"/><rect x="860" y="426" width="10" height="1" fill="#000"/><rect x="860" y="427" width="15" height="1" fill="#000"/><rect x="860" y="428" width="1" height="1" fill="#000"/><rect x="860" y="430" width="15" height="1" fill="#000"/><rect x="860" y="431" width="20" height="1" fill="#000"/><rect x="860" y="432" width="15" height="1" fill="#000"/><rect x="860" y="433" width="17" height="1" fill="#000"/><rect x="860" y="434" width="15" height="1" fill="#000"/><rect x="875" y="434" width="10" height="1" fill="#0a0a38"/><rect x="860" y="435" width="10" height="1" fill="#000"/><rect x="860" y="436" width="12" height="1" fill="#000"/><rect x="872" y="436" width="9" height="1" fill="#0a0a38"/><rect x="860" y="437" width="14" height="1" fill="#000"/><rect x="860" y="438" width="14" height="1" fill="#000"/><rect x="860" y="439" width="15" height="1" fill="#000"/><rect x="860" y="440" width="17" height="1" fill="#000"/><rect x="860" y="441" width="14" height="1" fill="#000"/><rect x="860" y="442" width="12" height="1" fill="#000"/><rect x="860" y="443" width="6" height="1" fill="#000"/><rect x="860" y="444" width="6" height="1" fill="#000"/><rect x="860" y="445" width="11" height="1" fill="#000"/><rect x="860" y="446" width="9" height="1" fill="#000"/><rect x="860" y="447" width="12" height="1" fill="#000"/><rect x="860" y="448" width="9" height="1" fill="#000"/><rect x="860" y="449" width="8" height="1" fill="#000"/><rect x="860" y="450" width="11" height="1" fill="#000"/><rect x="860" y="451" width="7" height="1" fill="#000"/><rect x="860" y="452" width="8" height="1" fill="#000"/><rect x="868" y="452" width="11" height="1" fill="#0a0a38"/><rect x="860" y="453" width="13" height="1" fill="#000"/><rect x="860" y="454" width="15" height="1" fill="#000"/><rect x="860" y="455" width="8" height="1" fill="#000"/><rect x="860" y="456" width="7" height="1" fill="#000"/><rect x="860" y="457" width="10" height="1" fill="#000"/><rect x="860" y="458" width="9" height="1" fill="#000"/><rect x="860" y="459" width="9" height="1" fill="#000"/><rect x="860" y="460" width="11" height="1" fill="#000"/><rect x="860" y="461" width="9" height="1" fill="#000"/><rect x="860" y="462" width="11" height="1" fill="#000"/><rect x="871" y="462" width="11" height="1" fill="#0a0a38"/><rect x="860" y="463" width="14" height="1" fill="#000"/><rect x="874" y="463" width="9" height="1" fill="#0a0a38"/><rect x="860" y="464" width="16" height="1" fill="#000"/><rect x="860" y="465" width="12" height="1" fill="#000"/><rect x="860" y="466" width="13" height="1" fill="#000"/><rect x="860" y="467" width="12" height="1" fill="#000"/><rect x="860" y="468" width="16" height="1" fill="#000"/><rect x="860" y="469" width="15" height="1" fill="#000"/><rect x="875" y="469" width="5" height="1" fill="#0a0a38"/><rect x="860" y="470" width="13" height="1" fill="#000"/><rect x="860" y="471" width="17" height="1" fill="#000"/><rect x="860" y="472" width="11" height="1" fill="#000"/><rect x="860" y="473" width="2" height="1" fill="#000"/><rect x="860" y="474" width="1" height="1" fill="#000"/><rect x="860" y="475" width="1" height="1" fill="#000"/><rect x="860" y="476" width="13" height="1" fill="#000"/><rect x="860" y="477" width="19" height="1" fill="#000"/><rect x="860" y="478" width="17" height="1" fill="#000"/><rect x="860" y="479" width="11" height="1" fill="#000"/><rect x="871" y="479" width="5" height="1" fill="#0a0a38"/><rect x="860" y="480" width="12" height="1" fill="#000"/><rect x="872" y="480" width="6" height="1" fill="#0a0a38"/><rect x="860" y="481" width="14" height="1" fill="#000"/><rect x="860" y="482" width="22" height="1" fill="#000"/><rect x="860" y="483" width="3" height="1" fill="#000"/><rect x="860" y="484" width="2" height="1" fill="#000"/><rect x="860" y="485" width="4" height="1" fill="#000"/><rect x="860" y="486" width="3" height="1" fill="#000"/><rect x="860" y="487" width="10" height="1" fill="#000"/><rect x="860" y="488" width="12" height="1" fill="#000"/><rect x="860" y="489" width="12" height="1" fill="#000"/><rect x="860" y="490" width="11" height="1" fill="#000"/><rect x="871" y="490" width="12" height="1" fill="#0a0a38"/><rect x="860" y="491" width="10" height="1" fill="#000"/><rect x="860" y="492" width="17" height="1" fill="#000"/><rect x="877" y="492" width="5" height="1" fill="#0a0a38"/><rect x="860" y="493" width="16" height="1" fill="#000"/><rect x="860" y="494" width="20" height="1" fill="#000"/><rect x="860" y="495" width="10" height="1" fill="#000"/><rect x="860" y="496" width="11" height="1" fill="#000"/><rect x="860" y="497" width="15" height="1" fill="#000"/><rect x="875" y="497" width="7" height="1" fill="#0a0a38"/><rect x="860" y="501" width="1" height="1" fill="#000"/><rect x="860" y="502" width="16" height="1" fill="#000"/><rect x="860" y="503" width="14" height="1" fill="#000"/><rect x="860" y="504" width="17" height="1" fill="#000"/><rect x="860" y="505" width="11" height="1" fill="#000"/><rect x="871" y="505" width="5" height="1" fill="#0a0a38"/><rect x="860" y="506" width="15" height="1" fill="#000"/><rect x="860" y="507" width="14" height="1" fill="#000"/><rect x="874" y="507" width="10" height="1" fill="#0a0a38"/><rect x="860" y="508" width="16" height="1" fill="#000"/><rect x="860" y="510" width="11" height="1" fill="#000"/><rect x="860" y="511" width="14" height="1" fill="#000"/><rect x="860" y="512" width="7" height="1" fill="#000"/><rect x="860" y="513" width="7" height="1" fill="#000"/><rect x="860" y="514" width="6" height="1" fill="#000"/><rect x="860" y="515" width="10" height="1" fill="#000"/><rect x="860" y="516" width="9" height="1" fill="#000"/><rect x="860" y="518" width="11" height="1" fill="#000"/><rect x="860" y="519" width="19" height="1" fill="#000"/><rect x="860" y="520" width="16" height="1" fill="#000"/><rect x="860" y="521" width="18" height="1" fill="#000"/><rect x="860" y="522" width="16" height="1" fill="#000"/><rect x="860" y="523" width="13" height="1" fill="#000"/><rect x="873" y="523" width="6" height="1" fill="#0a0a38"/><rect x="860" y="524" width="10" height="1" fill="#000"/><rect x="860" y="525" width="13" height="1" fill="#000"/><rect x="860" y="526" width="15" height="1" fill="#000"/><rect x="875" y="526" width="12" height="1" fill="#0a0a38"/><rect x="860" y="527" width="14" height="1" fill="#000"/><rect x="860" y="528" width="16" height="1" fill="#000"/><rect x="876" y="528" width="9" height="1" fill="#0a0a38"/><rect x="860" y="529" width="15" height="1" fill="#000"/><rect x="860" y="530" width="9" height="1" fill="#000"/><rect x="860" y="531" width="13" height="1" fill="#000"/><rect x="860" y="532" width="18" height="1" fill="#000"/><rect x="878" y="532" width="9" height="1" fill="#0a0a38"/><rect x="860" y="533" width="12" height="1" fill="#000"/><rect x="860" y="534" width="11" height="1" fill="#000"/><rect x="871" y="534" width="6" height="1" fill="#0a0a38"/><rect x="860" y="535" width="12" height="1" fill="#000"/><rect x="860" y="536" width="10" height="1" fill="#000"/><rect x="860" y="537" width="13" height="1" fill="#000"/><rect x="860" y="538" width="2" height="1" fill="#000"/><rect x="860" y="539" width="2" height="1" fill="#000"/><rect x="860" y="540" width="4" height="1" fill="#000"/><rect x="860" y="541" width="16" height="1" fill="#000"/><rect x="876" y="541" width="9" height="1" fill="#0a0a38"/><rect x="860" y="542" width="10" height="1" fill="#000"/><rect x="860" y="543" width="10" height="1" fill="#000"/><rect x="860" y="544" width="8" height="1" fill="#000"/><rect x="860" y="545" width="18" height="1" fill="#000"/><rect x="860" y="546" width="14" height="1" fill="#000"/><rect x="860" y="547" width="12" height="1" fill="#000"/><rect x="860" y="548" width="6" height="1" fill="#000"/><rect x="860" y="549" width="8" height="1" fill="#000"/><rect x="860" y="550" width="11" height="1" fill="#000"/><rect x="860" y="551" width="8" height="1" fill="#000"/><rect x="860" y="552" width="7" height="1" fill="#000"/><rect x="860" y="553" width="13" height="1" fill="#000"/><rect x="860" y="554" width="5" height="1" fill="#000"/><rect x="865" y="554" width="8" height="1" fill="#0a0a38"/><rect x="860" y="555" width="8" height="1" fill="#000"/><rect x="860" y="556" width="10" height="1" fill="#000"/><rect x="860" y="557" width="8" height="1" fill="#000"/><rect x="860" y="558" width="7" height="1" fill="#000"/><rect x="860" y="559" width="1" height="1" fill="#000"/><rect x="860" y="560" width="2" height="1" fill="#000"/><rect x="860" y="561" width="1" height="1" fill="#000"/><rect x="860" y="562" width="6" height="1" fill="#000"/><rect x="860" y="563" width="6" height="1" fill="#000"/><rect x="860" y="564" width="11" height="1" fill="#000"/><rect x="860" y="565" width="8" height="1" fill="#000"/><rect x="860" y="566" width="7" height="1" fill="#000"/><rect x="860" y="567" width="1" height="1" fill="#000"/><rect x="860" y="568" width="1" height="1" fill="#000"/><rect x="860" y="569" width="9" height="1" fill="#000"/><rect x="860" y="570" width="7" height="1" fill="#000"/><rect x="860" y="571" width="10" height="1" fill="#000"/><rect x="860" y="573" width="3" height="1" fill="#000"/><rect x="860" y="574" width="3" height="1" fill="#000"/><rect x="860" y="575" width="17" height="1" fill="#000"/><rect x="860" y="576" width="14" height="1" fill="#000"/><rect x="860" y="577" width="13" height="1" fill="#000"/><rect x="860" y="578" width="9" height="1" fill="#000"/><rect x="860" y="579" width="10" height="1" fill="#000"/><rect x="860" y="580" width="10" height="1" fill="#000"/><rect x="870" y="580" width="9" height="1" fill="#0a0a38"/><rect x="860" y="582" width="1" height="1" fill="#000"/><rect x="860" y="583" width="1" height="1" fill="#000"/><rect x="860" y="584" width="3" height="1" fill="#000"/><rect x="860" y="585" width="2" height="1" fill="#000"/><rect x="860" y="586" width="3" height="1" fill="#000"/><rect x="860" y="587" width="3" height="1" fill="#000"/><rect x="860" y="588" width="13" height="1" fill="#000"/><rect x="860" y="589" width="16" height="1" fill="#000"/><rect x="860" y="590" width="14" height="1" fill="#000"/><rect x="860" y="591" width="11" height="1" fill="#000"/><rect x="871" y="591" width="8" height="1" fill="#0a0a38"/><rect x="860" y="592" width="17" height="1" fill="#000"/><rect x="860" y="593" width="9" height="1" fill="#000"/><rect x="860" y="594" width="12" height="1" fill="#000"/><rect x="860" y="595" width="3" height="1" fill="#000"/><rect x="860" y="596" width="2" height="1" fill="#000"/><rect x="860" y="597" width="11" height="1" fill="#000"/><rect x="871" y="597" width="4" height="1" fill="#0a0a38"/><rect x="860" y="598" width="10" height="1" fill="#000"/><rect x="860" y="599" width="11" height="1" fill="#000"/><rect x="860" y="600" width="16" height="1" fill="#000"/><rect x="860" y="601" width="10" height="1" fill="#000"/><rect x="860" y="602" width="11" height="1" fill="#000"/><rect x="860" y="603" width="11" height="1" fill="#000"/><rect x="871" y="603" width="5" height="1" fill="#0a0a38"/><rect x="860" y="604" width="11" height="1" fill="#000"/><rect x="860" y="605" width="10" height="1" fill="#000"/><rect x="860" y="606" width="11" height="1" fill="#000"/><rect x="871" y="606" width="9" height="1" fill="#0a0a38"/><rect x="860" y="607" width="12" height="1" fill="#000"/><rect x="860" y="608" width="12" height="1" fill="#000"/><rect x="872" y="608" width="6" height="1" fill="#0a0a38"/><rect x="860" y="609" width="9" height="1" fill="#000"/><rect x="869" y="609" width="5" height="1" fill="#0a0a38"/><rect x="860" y="610" width="11" height="1" fill="#000"/><rect x="860" y="611" width="12" height="1" fill="#000"/><rect x="860" y="612" width="12" height="1" fill="#000"/><rect x="860" y="613" width="12" height="1" fill="#000"/><rect x="860" y="614" width="10" height="1" fill="#000"/><rect x="860" y="615" width="9" height="1" fill="#000"/><rect x="860" y="616" width="11" height="1" fill="#000"/><rect x="860" y="617" width="14" height="1" fill="#000"/><rect x="860" y="618" width="14" height="1" fill="#000"/><rect x="860" y="619" width="8" height="1" fill="#000"/><rect x="868" y="619" width="9" height="1" fill="#0a0a38"/><rect x="860" y="620" width="11" height="1" fill="#000"/><rect x="860" y="621" width="10" height="1" fill="#000"/><rect x="860" y="622" width="11" height="1" fill="#000"/><rect x="860" y="623" width="8" height="1" fill="#000"/><rect x="860" y="624" width="6" height="1" fill="#000"/><rect x="860" y="625" width="5" height="1" fill="#000"/><rect x="860" y="626" width="1" height="1" fill="#000"/><rect x="860" y="629" width="16" height="1" fill="#000"/><rect x="876" y="629" width="11" height="1" fill="#0a0a38"/><rect x="860" y="630" width="17" height="1" fill="#000"/><rect x="860" y="631" width="14" height="1" fill="#000"/><rect x="874" y="631" width="5" height="1" fill="#0a0a38"/><rect x="860" y="632" width="18" height="1" fill="#000"/><rect x="860" y="633" width="11" height="1" fill="#000"/><rect x="871" y="633" width="8" height="1" fill="#0a0a38"/><rect x="860" y="634" width="14" height="1" fill="#000"/><rect x="860" y="635" width="16" height="1" fill="#000"/><rect x="860" y="636" width="21" height="1" fill="#000"/><rect x="860" y="637" width="12" height="1" fill="#000"/><rect x="860" y="638" width="15" height="1" fill="#000"/><rect x="860" y="639" width="18" height="1" fill="#000"/><rect x="860" y="640" width="21" height="1" fill="#000"/><rect x="860" y="641" width="21" height="1" fill="#000"/><rect x="860" y="642" width="19" height="1" fill="#000"/><rect x="879" y="642" width="11" height="1" fill="#0a0a38"/><rect x="860" y="643" width="18" height="1" fill="#000"/><rect x="860" y="644" width="16" height="1" fill="#000"/><rect x="860" y="645" width="14" height="1" fill="#000"/><rect x="874" y="645" width="6" height="1" fill="#0a0a38"/><rect x="860" y="646" width="16" height="1" fill="#000"/><rect x="860" y="647" width="16" height="1" fill="#000"/><rect x="860" y="648" width="16" height="1" fill="#000"/><rect x="860" y="649" width="10" height="1" fill="#000"/><rect x="860" y="650" width="14" height="1" fill="#000"/><rect x="860" y="651" width="14" height="1" fill="#000"/><rect x="860" y="652" width="14" height="1" fill="#000"/><rect x="860" y="653" width="15" height="1" fill="#000"/><rect x="860" y="654" width="15" height="1" fill="#000"/><rect x="860" y="655" width="17" height="1" fill="#000"/><rect x="860" y="656" width="15" height="1" fill="#000"/><rect x="860" y="657" width="18" height="1" fill="#000"/><rect x="860" y="658" width="11" height="1" fill="#000"/><rect x="871" y="658" width="10" height="1" fill="#0a0a38"/><rect x="860" y="659" width="10" height="1" fill="#000"/><rect x="860" y="660" width="13" height="1" fill="#000"/><rect x="860" y="661" width="15" height="1" fill="#000"/><rect x="875" y="661" width="12" height="1" fill="#0a0a38"/><rect x="860" y="662" width="9" height="1" fill="#000"/><rect x="860" y="663" width="15" height="1" fill="#000"/><rect x="860" y="664" width="12" height="1" fill="#000"/><rect x="860" y="665" width="2" height="1" fill="#000"/><rect x="860" y="666" width="3" height="1" fill="#000"/><rect x="860" y="667" width="6" height="1" fill="#000"/><rect x="860" y="668" width="11" height="1" fill="#000"/><rect x="860" y="669" width="4" height="1" fill="#000"/><rect x="860" y="670" width="6" height="1" fill="#000"/><rect x="860" y="671" width="11" height="1" fill="#000"/><rect x="860" y="672" width="8" height="1" fill="#000"/><rect x="860" y="673" width="10" height="1" fill="#000"/><rect x="860" y="674" width="6" height="1" fill="#000"/><rect x="860" y="675" width="10" height="1" fill="#000"/><rect x="860" y="676" width="4" height="1" fill="#000"/><rect x="860" y="677" width="10" height="1" fill="#000"/><rect x="860" y="678" width="11" height="1" fill="#000"/><rect x="860" y="679" width="8" height="1" fill="#000"/><rect x="860" y="680" width="12" height="1" fill="#000"/><rect x="860" y="681" width="9" height="1" fill="#000"/><rect x="860" y="682" width="9" height="1" fill="#000"/><rect x="860" y="683" width="6" height="1" fill="#000"/><rect x="860" y="684" width="11" height="1" fill="#000"/><rect x="871" y="684" width="8" height="1" fill="#0a0a38"/><rect x="860" y="685" width="12" height="1" fill="#000"/><rect x="860" y="686" width="6" height="1" fill="#000"/><rect x="860" y="687" width="12" height="1" fill="#000"/><rect x="872" y="687" width="6" height="1" fill="#0a0a38"/><rect x="860" y="688" width="4" height="1" fill="#000"/><rect x="860" y="689" width="7" height="1" fill="#000"/><rect x="860" y="690" width="8" height="1" fill="#000"/><rect x="860" y="691" width="13" height="1" fill="#000"/><rect x="860" y="692" width="15" height="1" fill="#000"/><rect x="875" y="692" width="6" height="1" fill="#0a0a38"/><rect x="860" y="693" width="7" height="1" fill="#000"/><rect x="860" y="694" width="7" height="1" fill="#000"/><rect x="860" y="695" width="10" height="1" fill="#000"/><rect x="860" y="696" width="7" height="1" fill="#000"/><rect x="860" y="697" width="11" height="1" fill="#000"/><rect x="860" y="698" width="15" height="1" fill="#000"/><rect x="860" y="699" width="12" height="1" fill="#000"/><rect x="860" y="700" width="11" height="1" fill="#000"/><rect x="860" y="701" width="10" height="1" fill="#000"/><rect x="860" y="702" width="15" height="1" fill="#000"/><rect x="860" y="703" width="14" height="1" fill="#000"/><rect x="860" y="704" width="9" height="1" fill="#000"/><rect x="860" y="705" width="9" height="1" fill="#000"/><rect x="860" y="706" width="15" height="1" fill="#000"/><rect x="860" y="707" width="13" height="1" fill="#000"/><rect x="873" y="707" width="8" height="1" fill="#0a0a38"/><rect x="860" y="708" width="7" height="1" fill="#000"/><rect x="860" y="709" width="3" height="1" fill="#000"/><rect x="860" y="710" width="3" height="1" fill="#000"/><rect x="860" y="711" width="11" height="1" fill="#000"/><rect x="871" y="711" width="7" height="1" fill="#0a0a38"/><rect x="860" y="712" width="11" height="1" fill="#000"/><rect x="860" y="713" width="13" height="1" fill="#000"/><rect x="860" y="714" width="10" height="1" fill="#000"/><rect x="870" y="714" width="7" height="1" fill="#0a0a38"/><rect x="860" y="715" width="14" height="1" fill="#000"/><rect x="860" y="716" width="14" height="1" fill="#000"/><rect x="860" y="717" width="16" height="1" fill="#000"/><rect x="860" y="718" width="12" height="1" fill="#000"/><rect x="872" y="718" width="4" height="1" fill="#0a0a38"/><rect x="860" y="719" width="16" height="1" fill="#000"/><rect x="860" y="720" width="14" height="1" fill="#000"/><rect x="860" y="721" width="11" height="1" fill="#000"/><rect x="860" y="722" width="11" height="1" fill="#000"/><rect x="871" y="722" width="9" height="1" fill="#0a0a38"/><rect x="860" y="723" width="17" height="1" fill="#000"/><rect x="860" y="725" width="2" height="1" fill="#000"/><rect x="860" y="726" width="1" height="1" fill="#000"/><rect x="860" y="727" width="2" height="1" fill="#000"/><rect x="860" y="728" width="20" height="1" fill="#000"/><rect x="860" y="729" width="19" height="1" fill="#000"/><rect x="879" y="729" width="8" height="1" fill="#0a0a38"/><rect x="860" y="730" width="14" height="1" fill="#000"/><rect x="874" y="730" width="6" height="1" fill="#0a0a38"/><rect x="860" y="731" width="1" height="1" fill="#000"/><rect x="860" y="732" width="1" height="1" fill="#000"/><rect x="860" y="733" width="1" height="1" fill="#000"/><rect x="860" y="734" width="2" height="1" fill="#000"/><rect x="860" y="735" width="10" height="1" fill="#000"/><rect x="860" y="736" width="13" height="1" fill="#000"/><rect x="860" y="737" width="7" height="1" fill="#000"/><rect x="860" y="738" width="14" height="1" fill="#000"/><rect x="860" y="739" width="8" height="1" fill="#000"/><rect x="860" y="740" width="8" height="1" fill="#000"/><rect x="860" y="741" width="9" height="1" fill="#000"/><rect x="869" y="741" width="12" height="1" fill="#0a0a38"/><rect x="860" y="742" width="10" height="1" fill="#000"/><rect x="860" y="743" width="5" height="1" fill="#000"/><rect x="860" y="744" width="9" height="1" fill="#000"/><rect x="860" y="745" width="7" height="1" fill="#000"/><rect x="867" y="745" width="9" height="1" fill="#0a0a38"/><rect x="860" y="746" width="14" height="1" fill="#000"/><rect x="860" y="747" width="18" height="1" fill="#000"/><rect x="860" y="748" width="13" height="1" fill="#000"/><rect x="860" y="749" width="6" height="1" fill="#000"/><rect x="860" y="750" width="15" height="1" fill="#000"/><rect x="860" y="751" width="7" height="1" fill="#000"/><rect x="860" y="752" width="14" height="1" fill="#000"/><rect x="874" y="752" width="7" height="1" fill="#0a0a38"/><rect x="860" y="753" width="14" height="1" fill="#000"/><rect x="860" y="754" width="10" height="1" fill="#000"/><rect x="860" y="755" width="8" height="1" fill="#000"/><rect x="860" y="756" width="18" height="1" fill="#000"/><rect x="860" y="757" width="18" height="1" fill="#000"/><rect x="860" y="758" width="19" height="1" fill="#000"/><rect x="860" y="759" width="15" height="1" fill="#000"/><rect x="875" y="759" width="6" height="1" fill="#0a0a38"/><rect x="860" y="760" width="11" height="1" fill="#000"/><rect x="860" y="761" width="11" height="1" fill="#000"/><rect x="871" y="761" width="9" height="1" fill="#0a0a38"/><rect x="860" y="762" width="13" height="1" fill="#000"/><rect x="873" y="762" width="7" height="1" fill="#0a0a38"/><rect x="860" y="763" width="11" height="1" fill="#000"/><rect x="860" y="764" width="8" height="1" fill="#000"/><rect x="860" y="765" width="11" height="1" fill="#000"/><rect x="860" y="766" width="8" height="1" fill="#000"/><rect x="860" y="767" width="9" height="1" fill="#000"/><rect x="860" y="768" width="3" height="1" fill="#000"/><rect x="860" y="769" width="1" height="1" fill="#000"/><rect x="860" y="770" width="1" height="1" fill="#000"/><rect x="860" y="771" width="3" height="1" fill="#000"/><rect x="860" y="772" width="2" height="1" fill="#000"/><rect x="860" y="773" width="2" height="1" fill="#000"/><rect x="860" y="774" width="1" height="1" fill="#000"/><rect x="860" y="775" width="2" height="1" fill="#000"/><rect x="860" y="19" width="80" height="1" fill="#868686"/><rect x="860" y="97" width="80" height="1" fill="#868686"/><rect x="860" y="175" width="80" height="1" fill="#868686"/><rect x="860" y="253" width="80" height="1" fill="#868686"/><rect x="860" y="331" width="80" height="1" fill="#868686"/><rect x="860" y="409" width="80" height="1" fill="#868686"/><rect x="860" y="487" width="80" height="1" fill="#868686"/><rect x="860" y="565" width="80" height="1" fill="#868686"/><rect x="860" y="643" width="80" height="1" fill="#868686"/><rect x="860" y="721" width="80" height="1" fill="#868686"/><polyline points="860.5,2 860.5,20 862.9,22 865.3,24 868.9,27 866.6,30 865.9,32 868.5,35 869.6,39 869.0,42 871.2,45 868.7,48 869.7,50 872.2,53 873.6,55 869.8,58 867.8,62 870.8,66 868.6,69 870.6,72 871.3,74 871.8,78 870.4,81 870.9,85 869.2,88 872.1,92 871.8,95 870.0,97 868.5,99 869.5,101 872.3,104 871.7,107 869.0,111 867.4,114 869.0,117 872.0,119 872.1,121 869.3,125 871.8,128 871.7,130 873.2,133 870.7,135 870.1,137 871.0,140 872.5,143 870.3,145 872.7,148 871.8,151 868.8,155 868.3,159 867.9,163 866.5,167 866.0,170 868.4,173 871.3,175 871.5,179 868.8,183 868.1,186 873.1,189 875.6,192 876.8,194 879.6,198 878.7,202 882.9,205 883.1,208 886.5,211 883.6,215 881.3,217 886.5,221 886.3,225 885.6,229 888.5,232 887.8,234 889.1,236 888.7,239 881.2,242 875.6,244 867.6,246 869.3,248 869.1,251 871.6,254 871.9,257 870.2,259 872.6,262 869.1,265 867.4,268 866.7,270 868.4,273 871.1,276 872.7,279 870.3,282 872.6,285 870.3,288 871.6,292 871.8,295 871.0,298 870.3,301 870.1,305 871.0,308 870.6,312 870.3,316 871.7,318 871.5,321 872.6,324 873.6,328 871.4,331 869.4,334 868.6,338 869.4,341 867.5,345 870.1,348 867.6,351 869.4,354 870.5,357 870.0,360 870.4,362 869.1,364 870.8,367 872.2,370 873.6,372 869.9,375 867.6,379 867.6,381 866.8,383 865.8,386 867.6,389 866.4,392 865.5,394 869.0,397 867.4,401 868.2,404 866.5,408 867.3,410 866.4,412 868.5,415 869.4,419 869.1,421 872.0,424 869.2,428 868.0,431 870.8,434 869.1,437 867.3,440 869.4,444 868.8,446 866.7,450 867.5,454 868.0,456 867.2,459 867.9,462 870.6,466 869.8,468 870.6,472 870.8,475 872.3,478 872.7,482 874.0,484 871.1,487 871.0,490 870.4,493 872.8,495 870.7,499 869.5,502 867.1,505 867.8,507 869.0,511 870.0,514 871.0,517 870.6,520 870.7,523 873.0,526 870.7,530 869.8,534 869.2,536 872.0,538 873.7,540 872.4,543 871.7,547 870.2,551 867.6,554 867.3,557 866.0,561 867.8,564 867.7,566 866.1,569 868.4,571 869.7,575 872.2,578 868.9,581 868.5,584 868.0,588 870.5,590 869.9,592 867.9,595 868.1,599 867.3,602 867.8,605 866.9,607 867.0,611 865.9,615 868.0,618 867.7,622 866.5,626 868.6,629 870.0,631 868.0,634 867.0,636 865.8,638 865.1,640 865.2,643 866.5,645 869.0,647 869.4,650 872.2,652 871.0,655 868.2,657 868.7,659 870.9,663 869.8,666 871.7,669 871.0,671 870.1,673 871.0,676 869.9,680 871.1,684 868.2,687 867.1,691 867.3,694 870.5,697 868.8,699 870.1,701 869.0,705 870.9,709 870.0,711 871.6,713 873.1,716 872.2,718 872.6,720 870.9,723 869.3,725 872.0,729 871.7,731 872.7,734 874.2,737 870.7,740 871.0,744 868.8,746 868.3,749 870.6,751 872.7,754 873.5,758 867.6,762 866.2,765 865.3,767 863.9,770 862.5,773 860.5,778" fill="none" stroke="#c83636" stroke-width="1.3"/><circle cx="873.5" cy="46.5" r="3.2" fill="#000" stroke="#bf3030" stroke-width="1.3"/><polyline points="861.0,13.0 866.0,15.0 871.0,17.0 875.0,20.0 880.0,22.0 883.0,23.0 881.9,25.0 883.6,27.0 886.4,28.5 888.0,30.5 883.4,33.0 888.1,35.5 884.3,38.5 886.2,40.5 882.2,42.0 885.9,43.5 882.4,46.0 886.5,48.5 882.0,50.0 887.2,52.0 882.2,54.0 886.1,56.0 884.0,58.0 882.9,60.5 887.3,62.0 882.3,63.5 886.3,65.5 882.3,67.0 886.9,69.5 883.6,72.5 886.8,75.0 884.2,77.0 887.5,79.0 886.5,81.0 882.7,83.0 887.3,84.5 883.0,87.0 887.3,90.0 882.2,92.0 887.4,94.0 882.7,96.0 885.8,97.5 883.7,99.0 887.6,101.5 884.1,103.0 886.5,105.0 884.0,107.0 885.4,110.0 888.8,112.5 885.5,114.0 884.9,116.5 890.4,118.0 887.4,120.5 891.1,123.5 886.6,125.5 886.1,127.0 891.8,130.0 888.2,132.0 892.1,133.5 892.5,135.0 889.9,137.0 893.8,140.0 888.7,143.0 893.0,145.0 891.1,147.5 895.0,149.0 890.6,152.0 896.6,154.0 891.4,155.5 895.1,158.0 892.6,160.5 896.6,163.0 894.7,165.5 898.5,167.0 894.8,170.0 899.5,172.0 896.3,175.0 900.6,177.0 898.6,179.0 905.5,181.0 906.4,183.0 904.8,184.5 911.0,186.5 910.0,188.5 911.6,191.0 920.4,193.0 915.4,195.0 924.5,198.0 920.3,200.5 920.8,202.5 931.8,204.0 927.1,205.5 931.3,208.5 926.9,210.5 937.5,212.5 928.3,214.5 935.7,216.5 927.1,219.5 935.6,221.5 931.2,223.0 936.5,226.0 925.9,228.0 932.5,230.0 926.6,231.5 933.8,234.0 925.7,236.0 931.6,238.5 920.4,240.5 923.3,243.0 915.4,246.0 906.3,247.5 907.1,249.5 900.1,251.5 902.8,253.5 898.8,255.5 902.2,258.5 897.5,260.5 899.1,263.5 899.1,266.5 893.7,269.0 896.9,272.0 891.6,275.0 893.6,278.0 892.6,280.5 889.0,283.0 890.1,285.0 887.6,286.5 890.3,288.5 884.8,290.5 883.0,293.5 886.2,295.5 884.1,298.0 886.5,301.0 887.7,304.0 883.9,307.0 886.2,309.5 883.9,311.5 887.9,314.0 882.7,316.0 886.0,318.5 883.5,321.5 885.7,323.5 883.4,325.5 887.0,328.5 886.5,330.5 886.3,332.5 882.9,334.0 887.3,336.0 887.0,337.5 883.2,339.0 882.8,341.0 886.2,342.5 886.9,345.5 882.4,348.0 885.9,350.0 882.2,351.5 882.3,353.5 887.7,355.5 881.9,358.5 887.5,360.5 883.6,362.5 887.9,365.5 886.5,367.5 883.6,369.0 886.0,371.5 882.5,373.0 887.6,374.5 883.0,377.5 882.2,380.0 887.4,382.0 884.1,384.0 886.9,386.5 882.4,388.5 887.7,391.0 881.9,393.5 886.0,395.0 886.5,397.0 888.0,400.0 883.3,402.0 885.9,404.0 883.8,406.0 885.8,407.5 883.2,410.5 883.1,412.0 886.5,414.0 882.2,416.0 886.7,418.5 887.4,420.5 882.5,422.5 887.0,425.0 885.8,427.0 882.9,429.5 887.5,432.5 882.2,435.5 885.8,437.5 882.4,440.5 887.3,442.5 887.8,444.5 886.2,447.0 887.9,450.0 887.3,452.0 883.6,455.0 887.2,457.0 884.3,459.0 887.7,462.0 883.4,464.0 885.7,465.5 883.9,467.5 884.3,469.0 886.2,471.0 883.7,473.0 888.0,475.5 882.0,478.0 886.2,481.0 883.1,483.0 886.2,486.0 883.8,489.0 886.7,491.0 883.7,492.5 887.1,494.0 882.8,497.0 886.5,498.5 882.3,501.0 886.2,504.0 887.3,506.0 883.0,508.5 886.3,510.5 886.1,512.5 884.3,515.0 887.7,517.0 882.3,520.0 886.3,523.0 882.9,524.5 888.0,527.5 883.9,530.5 887.3,533.5 882.8,535.5 887.6,537.5 883.1,540.0 887.0,541.5 882.3,544.5 883.8,546.0 884.0,549.0 886.2,550.5 887.9,553.0 887.9,555.5 888.0,557.0 881.9,559.5 883.8,562.5 886.0,564.5 882.9,566.5 887.2,568.5 882.9,571.5 886.1,574.5 883.3,577.0 887.4,579.5 882.3,581.0 883.1,583.0 887.6,585.0 882.7,587.0 887.6,588.5 882.7,590.0 886.9,592.0 881.9,594.0 885.8,596.5 883.4,598.0 882.1,600.5 887.0,602.0 886.3,603.5 882.7,605.5 887.5,607.0 883.9,609.5 887.9,611.0 886.2,613.5 882.7,615.5 886.7,617.0 886.8,620.0 882.5,622.5 887.4,624.5 884.0,626.5 886.9,629.0 883.8,631.0 886.8,633.5 883.9,635.0 882.2,636.5 887.3,638.5 883.4,641.5 885.8,644.0 882.9,646.0 882.9,647.5 888.1,650.0 883.8,652.0 885.9,653.5 882.5,655.5 887.6,657.5 883.4,660.5 886.5,663.5 882.4,666.0 885.8,668.0 883.7,670.0 887.0,673.0 887.7,674.5 888.1,676.5 883.3,678.5 886.3,681.0 883.3,682.5 886.7,684.5 884.0,686.5 883.7,688.5 882.8,690.5 887.9,692.5 887.9,695.5 882.5,698.0 886.9,700.0 882.5,702.5 887.9,704.5 883.9,707.0 887.3,709.5 882.8,712.0 886.2,714.5 887.0,717.0 884.3,719.0 887.7,721.0 884.3,723.5 886.4,725.5 884.1,727.0 888.1,729.0 883.4,730.5 884.3,733.0 884.3,736.0 886.6,738.0 882.8,741.0 886.3,742.5 883.7,745.0 885.8,747.0 884.4,749.5 885.6,752.5 881.4,755.5 883.8,757.5 879.0,760.0 882.1,761.5 882.2,763.5 875.4,766.5 880.0,768.5 875.4,770.5 872.1,773.0 877.0,775.0 872.0,781.0" fill="none" stroke="#3ce03c" stroke-width="1.1"/><rect x="860" y="1" width="80" height="12" fill="#000"/><rect x="860" y="778" width="80" height="4" fill="#000"/><rect x="860" y="1" width="1.5" height="12" fill="#a02828"/><polyline points="873,778 871.5,781" fill="none" stroke="#38dc38" stroke-width="1"/><polyline points="936.5,781 938,779 939.5,778" fill="none" stroke="#3ce03c" stroke-width="1.1"/></svg></body></html>
